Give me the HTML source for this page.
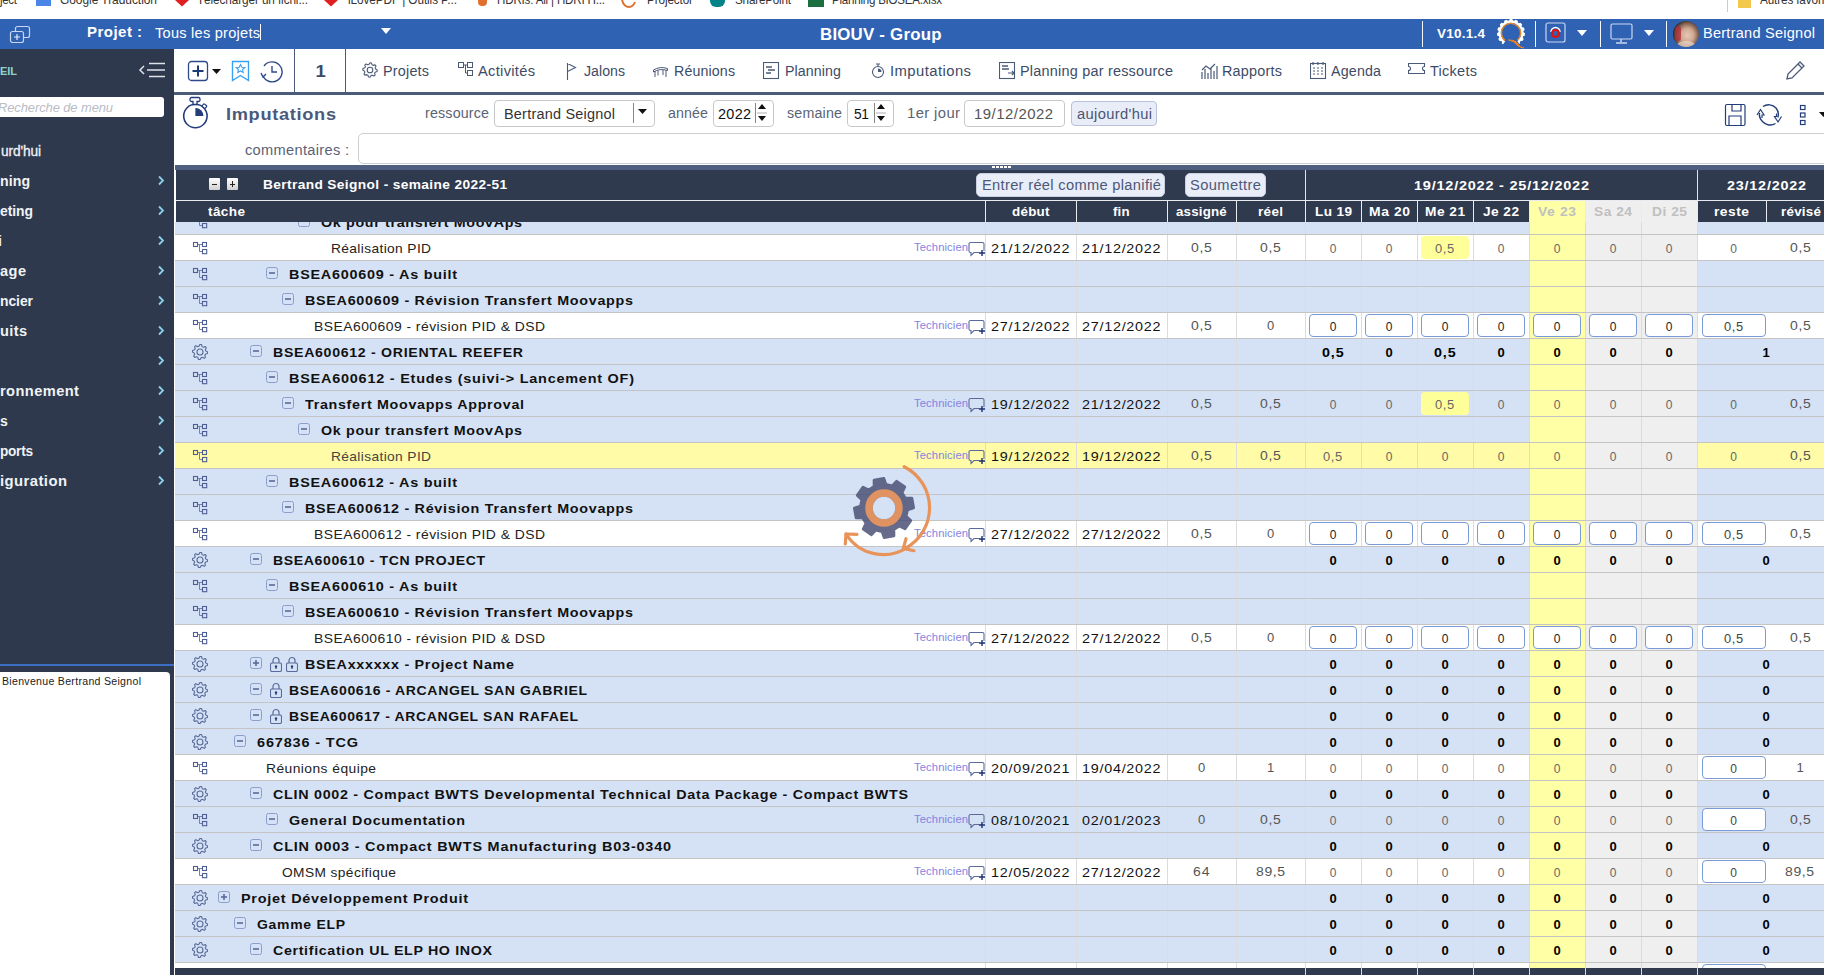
<!DOCTYPE html><html><head><meta charset="utf-8"><title>Imputations</title><style>
html,body{margin:0;padding:0;}
body{width:1824px;height:975px;overflow:hidden;position:relative;background:#fff;font-family:"Liberation Sans",sans-serif;}
.t{position:absolute;white-space:nowrap;}
.r{position:absolute;}
</style></head><body>
<div class="t " style="left:0.00px;top:-5.66px;font-size:12px;line-height:12px;color:#333;letter-spacing:-0.292px;transform:scaleX(0.9552);transform-origin:0 0;">ject</div>
<div class="t " style="left:60.00px;top:-5.66px;font-size:12px;line-height:12px;color:#333;letter-spacing:-0.033px;transform:scaleX(0.9946);transform-origin:0 0;">Google Traduction</div>
<div class="t " style="left:197.00px;top:-5.66px;font-size:12px;line-height:12px;color:#333;letter-spacing:-0.102px;transform:scaleX(0.9810);transform-origin:0 0;">Télécharger un fichi...</div>
<div class="t " style="left:348.00px;top:-5.66px;font-size:12px;line-height:12px;color:#333;letter-spacing:-0.095px;transform:scaleX(0.9826);transform-origin:0 0;">iLovePDF | Outils P...</div>
<div class="t " style="left:497.00px;top:-5.66px;font-size:12px;line-height:12px;color:#333;letter-spacing:-0.192px;transform:scaleX(0.9663);transform-origin:0 0;">HDRIs: All | HDRI H...</div>
<div class="t " style="left:647.00px;top:-5.66px;font-size:12px;line-height:12px;color:#333;letter-spacing:-0.129px;transform:scaleX(0.9790);transform-origin:0 0;">Projector</div>
<div class="t " style="left:735.00px;top:-5.66px;font-size:12px;line-height:12px;color:#333;letter-spacing:-0.193px;transform:scaleX(0.9716);transform-origin:0 0;">SharePoint</div>
<div class="t " style="left:832.00px;top:-5.66px;font-size:12px;line-height:12px;color:#333;letter-spacing:-0.238px;transform:scaleX(0.9633);transform-origin:0 0;">Planning BIOSEA.xlsx</div>
<div class="t " style="left:1760.00px;top:-5.66px;font-size:12px;line-height:12px;color:#333;letter-spacing:-0.132px;transform:scaleX(0.9771);transform-origin:0 0;">Autres favoris</div>
<div class="r" style="left:36px;top:0px;width:15px;height:6px;background:#4a86e8;"></div>
<svg class="r" style="left:175px;top:0px;" width="14" height="7" viewBox="0 0 14 7"><path d="M0 0 L14 0 L7 6.5 Z" fill="#e02020"/></svg>
<svg class="r" style="left:324px;top:0px;" width="14" height="7" viewBox="0 0 14 7"><path d="M0 0 L14 0 L7 6.5 Z" fill="#e02020"/></svg>
<div class="r" style="left:478px;top:0px;width:9px;height:6px;background:#e07030;border-radius:0 0 4px 4px;"></div>
<svg class="r" style="left:620px;top:0px;" width="18" height="8" viewBox="0 0 18 8"><path d="M2 0 Q4 7 9 7 Q13 7 15 2" stroke="#e07030" stroke-width="2" fill="none"/></svg>
<div class="r" style="left:710px;top:0px;width:15px;height:7px;background:#038387;border-radius:0 0 6px 6px;"></div>
<div class="r" style="left:808px;top:0px;width:16px;height:7px;background:#1d6f42;"></div>
<div class="r" style="left:1727px;top:0px;width:1px;height:12px;background:#ccc;"></div>
<div class="r" style="left:1738px;top:0px;width:13px;height:8px;background:#f2c94c;"></div>
<div class="r" style="left:0px;top:19px;width:1824px;height:30px;background:#3062b3;"></div>
<svg class="r" style="left:8px;top:25px;" width="24" height="18" viewBox="0 0 24 18"><rect x="7.5" y="1.5" width="14" height="11" rx="2" fill="none" stroke="#c9d6f0" stroke-width="1.2"/><rect x="2.5" y="6.5" width="13" height="11" rx="2" fill="#3062b3" stroke="#c9d6f0" stroke-width="1.2"/><path d="M9 9v6M6 12h6" stroke="#e6edf9" stroke-width="1.2"/></svg>
<div class="t " style="left:87.00px;top:25.15px;font-size:14px;line-height:14px;color:#fff;font-weight:bold;letter-spacing:0.452px;transform:scaleX(1.0702);transform-origin:0 0;">Projet :</div>
<div class="t " style="left:155.00px;top:26.15px;font-size:14px;line-height:14px;color:#fff;letter-spacing:0.248px;transform:scaleX(1.0397);transform-origin:0 0;">Tous les projets</div>
<div class="r" style="left:260px;top:24px;width:1px;height:16px;background:#fff;"></div>
<svg class="r" style="left:381px;top:28px;" width="10" height="6" viewBox="0 0 10 6"><path d="M0 0h10L5 6z" fill="#fff"/></svg>
<div class="t " style="left:819.75px;top:25.83px;font-size:16.5px;line-height:16.5px;color:#fff;font-weight:bold;letter-spacing:0.208px;transform:scaleX(1.0219);transform-origin:0 0;">BIOUV - Group</div>
<div class="r" style="left:1422px;top:21px;width:1px;height:26px;background:#fff;opacity:0.95;"></div>
<div class="r" style="left:1535px;top:21px;width:1px;height:26px;background:#fff;opacity:0.95;"></div>
<div class="r" style="left:1600px;top:21px;width:1px;height:26px;background:#fff;opacity:0.95;"></div>
<div class="r" style="left:1666px;top:21px;width:1px;height:26px;background:#fff;opacity:0.95;"></div>
<div class="t " style="left:1437.00px;top:27.00px;font-size:13px;line-height:13px;color:#fff;font-weight:bold;letter-spacing:0.256px;transform:scaleX(1.0355);transform-origin:0 0;">V10.1.4</div>
<svg class="r" style="left:1495px;top:19px;" width="32" height="30" viewBox="0 0 32 30"><path d="M14.03,1.56 L14.78,0.05 L17.22,0.05 L17.97,1.56 L19.26,1.83 L20.56,0.76 L22.79,1.76 L22.86,3.43 L23.93,4.21 L25.55,3.76 L27.18,5.57 L26.57,7.14 L27.23,8.28 L28.89,8.53 L29.64,10.85 L28.44,12.03 L28.58,13.34 L30.00,14.24 L29.74,16.67 L28.17,17.26 L27.76,18.52 L28.69,19.92 L27.47,22.03 L25.79,21.93 L24.91,22.91 L25.18,24.57 L23.21,26.00 L21.72,25.23 L20.52,25.76 L20.09,27.39 L17.71,27.90 L16.66,26.58 L15.34,26.58 L14.29,27.90 L11.91,27.39 L11.48,25.76 L10.28,25.23 L8.79,26.00 L6.82,24.57 L7.09,22.91 L6.21,21.93 L4.53,22.03 L3.31,19.92 L4.24,18.52 L3.83,17.26 L2.26,16.67 L2.00,14.24 L3.42,13.34 L3.56,12.03 L2.36,10.85 L3.11,8.53 L4.77,8.28 L5.43,7.14 L4.82,5.57 L6.45,3.76 L8.07,4.21 L9.14,3.43 L9.21,1.76 L11.44,0.76 L12.74,1.83Z" fill="#fff"/><circle cx="16" cy="14" r="10.2" fill="#3062b3"/><path d="M16,14 L27.08,28.18 L16.00,34.00 L5.68,28.74Z" fill="#3062b3"/><path d="M10.09,21.56 A9.6 9.6 0 1 1 22.42,21.13" stroke="#e8892b" stroke-width="1.3" fill="none"/><path d="M13.5,21 Q21,21 23,25 Q25,29 29,29 Q23,28 21,25 Q19,22 13.5,21Z" fill="#f08020" stroke="#f08020" stroke-width="1"/></svg>
<svg class="r" style="left:1545px;top:22px;" width="22" height="22" viewBox="0 0 22 22"><rect x="1" y="1" width="19" height="19" rx="2" fill="none" stroke="#c9d6f0" stroke-width="1.2"/><path d="M6 10 a4.5 4.5 0 0 1 9 0" stroke="#fff" stroke-width="1.5" fill="none"/><circle cx="10.5" cy="11.5" r="3.5" fill="none" stroke="#e01010" stroke-width="2.2"/></svg>
<svg class="r" style="left:1577px;top:30px;" width="10" height="6" viewBox="0 0 10 6"><path d="M0 0h10L5 6z" fill="#fff"/></svg>
<svg class="r" style="left:1610px;top:23px;" width="24" height="22" viewBox="0 0 24 22"><rect x="1" y="1" width="21" height="15" rx="1.5" fill="none" stroke="#c9d6f0" stroke-width="1.2"/><path d="M11 16v3M6 20h11" stroke="#c9d6f0" stroke-width="1.5"/></svg>
<svg class="r" style="left:1644px;top:30px;" width="10" height="6" viewBox="0 0 10 6"><path d="M0 0h10L5 6z" fill="#fff"/></svg>
<div class="r" style="left:1673px;top:21px;width:26px;height:26px;border-radius:50%;overflow:hidden;background:radial-gradient(ellipse 55% 60% at 55% 55%,#e6c8b8 0,#d0a890 45%,#7a5a4a 80%,#2e2420 100%);"><div style="position:absolute;left:2px;top:5px;width:6px;height:15px;border-radius:3px;background:#b02a3a;opacity:0.75;"></div><div style="position:absolute;left:4px;top:20px;width:18px;height:8px;background:#e8d8c8;opacity:0.7;border-radius:50%;"></div></div>
<div class="t " style="left:1703.00px;top:26.15px;font-size:14px;line-height:14px;color:#fff;letter-spacing:0.248px;transform:scaleX(1.0370);transform-origin:0 0;">Bertrand Seignol</div>
<div class="r" style="left:0px;top:49px;width:174px;height:926px;background:#2e394d;"></div>
<div class="t " style="left:0.00px;top:65.69px;font-size:11px;line-height:11px;color:#8fd3c8;font-weight:bold;letter-spacing:-0.028px;">EIL</div>
<svg class="r" style="left:138px;top:60px;" width="30" height="20" viewBox="0 0 30 20"><path d="M6 6 L2 10 L6 14" stroke="#e0e4ea" stroke-width="1.5" fill="none"/><path d="M11 3.5h16M9 10h18M11 16.5h16" stroke="#e0e4ea" stroke-width="1.6"/></svg>
<div class="r" style="left:-10px;top:97px;width:174px;height:20px;background:#fff;border-radius:3px;"></div>
<div class="t " style="left:-2.00px;top:101.00px;font-size:13px;line-height:13px;color:#b8bcc4;letter-spacing:-0.065px;transform:scaleX(0.9912);transform-origin:0 0;font-style:italic;">Recherche de menu</div>
<div class="t " style="left:1.00px;top:144.15px;font-size:14px;line-height:14px;color:#f0f2f5;letter-spacing:-0.135px;transform:scaleX(0.9809);transform-origin:0 0;-webkit-text-stroke:0.3px #f0f2f5;">urd&#x27;hui</div>
<div class="t " style="left:0.00px;top:174.15px;font-size:14px;line-height:14px;color:#f0f2f5;font-weight:bold;letter-spacing:0.075px;transform:scaleX(1.0077);transform-origin:0 0;">ning</div>
<svg class="r" style="left:157px;top:175px;" width="8" height="11" viewBox="0 0 8 11"><path d="M2 1.5 L6 5.5 L2 9.5" stroke="#8ccfe8" stroke-width="1.8" fill="none"/></svg>
<div class="t " style="left:0.00px;top:204.15px;font-size:14px;line-height:14px;color:#f0f2f5;font-weight:bold;letter-spacing:-0.056px;transform:scaleX(0.9934);transform-origin:0 0;">eting</div>
<svg class="r" style="left:157px;top:205px;" width="8" height="11" viewBox="0 0 8 11"><path d="M2 1.5 L6 5.5 L2 9.5" stroke="#8ccfe8" stroke-width="1.8" fill="none"/></svg>
<div class="t " style="left:-2.00px;top:234.15px;font-size:14px;line-height:14px;color:#f0f2f5;font-weight:bold;">i</div>
<svg class="r" style="left:157px;top:235px;" width="8" height="11" viewBox="0 0 8 11"><path d="M2 1.5 L6 5.5 L2 9.5" stroke="#8ccfe8" stroke-width="1.8" fill="none"/></svg>
<div class="t " style="left:0.00px;top:264.15px;font-size:14px;line-height:14px;color:#f0f2f5;font-weight:bold;letter-spacing:0.451px;transform:scaleX(1.0389);transform-origin:0 0;">age</div>
<svg class="r" style="left:157px;top:265px;" width="8" height="11" viewBox="0 0 8 11"><path d="M2 1.5 L6 5.5 L2 9.5" stroke="#8ccfe8" stroke-width="1.8" fill="none"/></svg>
<div class="t " style="left:0.00px;top:294.15px;font-size:14px;line-height:14px;color:#f0f2f5;font-weight:bold;letter-spacing:-0.058px;transform:scaleX(0.9931);transform-origin:0 0;">ncier</div>
<svg class="r" style="left:157px;top:295px;" width="8" height="11" viewBox="0 0 8 11"><path d="M2 1.5 L6 5.5 L2 9.5" stroke="#8ccfe8" stroke-width="1.8" fill="none"/></svg>
<div class="t " style="left:0.00px;top:324.15px;font-size:14px;line-height:14px;color:#f0f2f5;font-weight:bold;letter-spacing:0.337px;transform:scaleX(1.0424);transform-origin:0 0;">uits</div>
<svg class="r" style="left:157px;top:325px;" width="8" height="11" viewBox="0 0 8 11"><path d="M2 1.5 L6 5.5 L2 9.5" stroke="#8ccfe8" stroke-width="1.8" fill="none"/></svg>
<svg class="r" style="left:157px;top:355px;" width="8" height="11" viewBox="0 0 8 11"><path d="M2 1.5 L6 5.5 L2 9.5" stroke="#8ccfe8" stroke-width="1.8" fill="none"/></svg>
<div class="t " style="left:0.00px;top:384.15px;font-size:14px;line-height:14px;color:#f0f2f5;font-weight:bold;letter-spacing:0.398px;transform:scaleX(1.0460);transform-origin:0 0;">ronnement</div>
<svg class="r" style="left:157px;top:385px;" width="8" height="11" viewBox="0 0 8 11"><path d="M2 1.5 L6 5.5 L2 9.5" stroke="#8ccfe8" stroke-width="1.8" fill="none"/></svg>
<div class="t " style="left:0.00px;top:414.15px;font-size:14px;line-height:14px;color:#f0f2f5;font-weight:bold;">s</div>
<svg class="r" style="left:157px;top:415px;" width="8" height="11" viewBox="0 0 8 11"><path d="M2 1.5 L6 5.5 L2 9.5" stroke="#8ccfe8" stroke-width="1.8" fill="none"/></svg>
<div class="t " style="left:0.00px;top:444.15px;font-size:14px;line-height:14px;color:#f0f2f5;font-weight:bold;letter-spacing:-0.257px;transform:scaleX(0.9714);transform-origin:0 0;">ports</div>
<svg class="r" style="left:157px;top:445px;" width="8" height="11" viewBox="0 0 8 11"><path d="M2 1.5 L6 5.5 L2 9.5" stroke="#8ccfe8" stroke-width="1.8" fill="none"/></svg>
<div class="t " style="left:0.00px;top:474.15px;font-size:14px;line-height:14px;color:#f0f2f5;font-weight:bold;letter-spacing:0.420px;transform:scaleX(1.0594);transform-origin:0 0;">iguration</div>
<svg class="r" style="left:157px;top:475px;" width="8" height="11" viewBox="0 0 8 11"><path d="M2 1.5 L6 5.5 L2 9.5" stroke="#8ccfe8" stroke-width="1.8" fill="none"/></svg>
<div class="r" style="left:0px;top:664px;width:174px;height:2px;background:#3a6fc4;"></div>
<div class="r" style="left:-6px;top:672px;width:176px;height:310px;background:#fff;border-radius:4px;"></div>
<div class="t " style="left:2.00px;top:676.54px;font-size:10px;line-height:10px;color:#222;letter-spacing:0.273px;transform:scaleX(1.0581);transform-origin:0 0;">Bienvenue Bertrand Seignol</div>
<div class="r" style="left:174px;top:49px;width:1650px;height:43px;background:#fff;"></div>
<div class="r" style="left:174px;top:92px;width:1650px;height:3px;background:#4b5b7b;"></div>
<div class="r" style="left:294px;top:49px;width:1px;height:43px;background:#4b5b7b;"></div>
<div class="r" style="left:345px;top:49px;width:1px;height:43px;background:#4b5b7b;"></div>
<svg class="r" style="left:187px;top:60px;" width="22" height="22" viewBox="0 0 22 22"><rect x="1.5" y="1.5" width="19" height="19" rx="3" fill="none" stroke="#2e4a8a" stroke-width="1.3"/><path d="M11 5.5v11M5.5 11h11" stroke="#1a3a7a" stroke-width="2"/></svg>
<svg class="r" style="left:212px;top:69px;" width="9" height="5" viewBox="0 0 9 5"><path d="M0 0h9L4.5 5z" fill="#111"/></svg>
<svg class="r" style="left:231px;top:60px;" width="20" height="23" viewBox="0 0 20 23"><path d="M1.5 1.5h16v19l-8-5-8 5z" fill="none" stroke="#3aa0f0" stroke-width="1.4"/><path d="M9.5 4.5l1.3 2.7 3 .3-2.2 2 .6 3-2.7-1.5-2.7 1.5.6-3-2.2-2 3-.3z" fill="none" stroke="#3aa0f0" stroke-width="1.1"/></svg>
<svg class="r" style="left:259px;top:60px;" width="24" height="23" viewBox="0 0 24 23"><path d="M4 16 A10 10 0 1 0 5 6" stroke="#2e4a8a" stroke-width="1.4" fill="none"/><path d="M13 6v6h5" stroke="#2e4a8a" stroke-width="1.4" fill="none"/><path d="M2 13 L4 17 L7 14" stroke="#2e4a8a" stroke-width="1.4" fill="none"/></svg>
<div class="t " style="left:315.71px;top:62.73px;font-size:16.5px;line-height:16.5px;color:#3d4b66;font-weight:bold;transform:scaleX(1.12);">1</div>
<svg class="r" style="left:362px;top:62px;" width="18" height="19" viewBox="0 0 18 19"><path d="M8.00,0.80 L9.40,0.94 L10.14,2.83 L11.11,3.34 L13.09,2.91 L13.99,4.00 L13.17,5.86 L13.49,6.91 L15.20,8.00 L15.06,9.40 L13.17,10.14 L12.66,11.11 L13.09,13.09 L12.00,13.99 L10.14,13.17 L9.09,13.49 L8.00,15.20 L6.60,15.06 L5.86,13.17 L4.89,12.66 L2.91,13.09 L2.01,12.00 L2.83,10.14 L2.51,9.09 L0.80,8.00 L0.94,6.60 L2.83,5.86 L3.34,4.89 L2.91,2.91 L4.00,2.01 L5.86,2.83 L6.91,2.51Z" fill="none" stroke="#4b5a78" stroke-width="1.1" stroke-linejoin="round"/><circle cx="8" cy="8" r="2.8" fill="none" stroke="#4b5a78" stroke-width="1.1"/></svg>
<div class="t " style="left:383.00px;top:64.15px;font-size:14px;line-height:14px;color:#3d4b66;letter-spacing:0.197px;transform:scaleX(1.0279);transform-origin:0 0;">Projets</div>
<svg class="r" style="left:458px;top:62px;" width="18" height="19" viewBox="0 0 18 19"><rect x="0.5" y="0.5" width="5" height="5" fill="none" stroke="#4b5a78"/><rect x="9.5" y="0.5" width="5" height="5" fill="none" stroke="#4b5a78"/><rect x="9.5" y="8.5" width="5" height="5" fill="none" stroke="#4b5a78"/><path d="M5.5 3h4M7.5 3v8h2" stroke="#4b5a78" fill="none"/></svg>
<div class="t " style="left:478.00px;top:64.15px;font-size:14px;line-height:14px;color:#3d4b66;letter-spacing:0.291px;transform:scaleX(1.0468);transform-origin:0 0;">Activités</div>
<svg class="r" style="left:566px;top:62px;" width="18" height="19" viewBox="0 0 18 19"><path d="M1.5 1v17M1.5 1.5l8 4-8 4" stroke="#4b5a78" stroke-width="1.1" fill="none"/></svg>
<div class="t " style="left:584.00px;top:64.15px;font-size:14px;line-height:14px;color:#3d4b66;letter-spacing:0.053px;transform:scaleX(1.0066);transform-origin:0 0;">Jalons</div>
<svg class="r" style="left:652px;top:62px;" width="18" height="19" viewBox="0 0 18 19"><path d="M1.5 8 Q8 4 15.5 6.5 V8.5 Q8 6 1.5 10z M3 9v6M14 8v7M6 8.5v5M11 8v5" stroke="#4b5a78" stroke-width="1" fill="none"/></svg>
<div class="t " style="left:674.00px;top:64.15px;font-size:14px;line-height:14px;color:#3d4b66;letter-spacing:0.130px;transform:scaleX(1.0156);transform-origin:0 0;">Réunions</div>
<svg class="r" style="left:763px;top:62px;" width="18" height="19" viewBox="0 0 18 19"><rect x="0.5" y="0.5" width="15" height="16" fill="none" stroke="#4b5a78" stroke-width="1.1"/><path d="M3 5h6M5 8h7M3 11h5" stroke="#4b5a78" stroke-width="1.3"/></svg>
<div class="t " style="left:785.00px;top:64.15px;font-size:14px;line-height:14px;color:#3d4b66;letter-spacing:0.106px;transform:scaleX(1.0139);transform-origin:0 0;">Planning</div>
<svg class="r" style="left:871px;top:62px;" width="18" height="19" viewBox="0 0 18 19"><circle cx="7" cy="10" r="5.5" fill="none" stroke="#4b5a78" stroke-width="1.1"/><path d="M5 2h4M7 2v2.5" stroke="#4b5a78" stroke-width="1.1"/><path d="M7 10V6.5A3.5 3.5 0 0 1 10.5 10z" fill="#4b5a78"/></svg>
<div class="t " style="left:890.00px;top:64.15px;font-size:14px;line-height:14px;color:#3d4b66;letter-spacing:0.407px;transform:scaleX(1.0596);transform-origin:0 0;">Imputations</div>
<svg class="r" style="left:999px;top:62px;" width="18" height="19" viewBox="0 0 18 19"><rect x="0.5" y="0.5" width="15" height="16" fill="none" stroke="#4b5a78" stroke-width="1.1"/><path d="M3 4h6M3 7h7" stroke="#4b5a78" stroke-width="1.3"/><path d="M9 11h6l-2-2M15 11l-2 2" stroke="#4b5a78" stroke-width="1.1" fill="none"/></svg>
<div class="t " style="left:1020.00px;top:64.15px;font-size:14px;line-height:14px;color:#3d4b66;letter-spacing:0.208px;transform:scaleX(1.0314);transform-origin:0 0;">Planning par ressource</div>
<svg class="r" style="left:1201px;top:62px;" width="18" height="19" viewBox="0 0 18 19"><path d="M1 17V10M4 17V7M7 17V11M10 17V6M13 17V9M16 17V4M1 8l4-4 4 3 5-5" stroke="#4b5a78" stroke-width="1.2" fill="none"/></svg>
<div class="t " style="left:1222.00px;top:64.15px;font-size:14px;line-height:14px;color:#3d4b66;letter-spacing:0.222px;transform:scaleX(1.0281);transform-origin:0 0;">Rapports</div>
<svg class="r" style="left:1310px;top:62px;" width="18" height="19" viewBox="0 0 18 19"><rect x="0.5" y="1.5" width="15" height="15" fill="none" stroke="#4b5a78" stroke-width="1.1"/><path d="M3 0v3M8 0v3M13 0v3M3 6h2M7 6h2M11 6h2M3 9h2M7 9h2M11 9h2M3 12h2M7 12h2M11 12h2" stroke="#4b5a78" stroke-width="1.2"/></svg>
<div class="t " style="left:1331.00px;top:64.15px;font-size:14px;line-height:14px;color:#3d4b66;letter-spacing:0.170px;transform:scaleX(1.0179);transform-origin:0 0;">Agenda</div>
<svg class="r" style="left:1408px;top:62px;" width="18" height="19" viewBox="0 0 18 19"><path d="M0.5 1.5h16v3a2 2 0 0 0 0 4v3h-16v-3a2 2 0 0 0 0-4z" fill="none" stroke="#4b5a78" stroke-width="1.1"/></svg>
<div class="t " style="left:1430.00px;top:64.15px;font-size:14px;line-height:14px;color:#3d4b66;letter-spacing:0.256px;transform:scaleX(1.0363);transform-origin:0 0;">Tickets</div>
<svg class="r" style="left:1784px;top:60px;" width="22" height="22" viewBox="0 0 22 22"><path d="M3 19l1-5L16 2l4 4L8 18z" fill="none" stroke="#4b5a78" stroke-width="1.3"/><path d="M14 4l4 4" stroke="#4b5a78" stroke-width="1.3"/></svg>
<svg class="r" style="left:182px;top:96px;" width="28" height="34" viewBox="0 0 28 34"><circle cx="13.4" cy="20" r="11.7" fill="none" stroke="#233c7a" stroke-width="1.6"/><path d="M10.5 1.5h6a1.5 1.5 0 0 1 1.5 1.5v1a1.5 1.5 0 0 1-1.5 1.5h-1.5v3h-4v-3h-1.5a1.5 1.5 0 0 1-1.5-1.5v-1a1.5 1.5 0 0 1 1.5-1.5z" fill="#fff" stroke="#233c7a" stroke-width="1.3"/><rect x="20.5" y="8.5" width="4" height="3.2" rx="0.8" transform="rotate(38 22.5 10.1)" fill="#fff" stroke="#233c7a" stroke-width="1.2"/><path d="M13.4 20v-8a8 8 0 0 1 8 8z" fill="#233c7a"/></svg>
<div class="t " style="left:226.00px;top:105.61px;font-size:17px;line-height:17px;color:#4a5a7c;font-weight:bold;letter-spacing:0.638px;transform:scaleX(1.0710);transform-origin:0 0;">Imputations</div>
<div class="t " style="left:425.00px;top:106.15px;font-size:14px;line-height:14px;color:#5a6375;letter-spacing:0.155px;transform:scaleX(1.0206);transform-origin:0 0;">ressource</div>
<div class="r" style="left:494px;top:100px;width:159px;height:25px;border:1px solid #c8c8c8;border-radius:4px;background:#fff;"></div>
<div class="t " style="left:504.00px;top:107.15px;font-size:14px;line-height:14px;color:#333;letter-spacing:0.217px;transform:scaleX(1.0322);transform-origin:0 0;">Bertrand Seignol</div>
<div class="r" style="left:633px;top:103px;width:1px;height:20px;background:#888;"></div>
<svg class="r" style="left:638px;top:109px;" width="9" height="5" viewBox="0 0 9 5"><path d="M0 0h9L4.5 5z" fill="#111"/></svg>
<div class="t " style="left:668.00px;top:106.15px;font-size:14px;line-height:14px;color:#5a6375;letter-spacing:0.132px;transform:scaleX(1.0137);transform-origin:0 0;">année</div>
<div class="r" style="left:713px;top:100px;width:59px;height:25px;border:1px solid #c8c8c8;border-radius:4px;background:#fff;"></div>
<div class="t " style="left:718.00px;top:107.15px;font-size:14px;line-height:14px;color:#111;letter-spacing:0.300px;transform:scaleX(1.0298);transform-origin:0 0;">2022</div>
<div class="r" style="left:755px;top:103px;width:1px;height:20px;background:#888;"></div>
<svg class="r" style="left:757px;top:103px;" width="10" height="20" viewBox="0 0 10 20"><path d="M1 6h8L5 1z M1 13h8L5 18z" fill="#111"/><path d="M0 10h10" stroke="#999" stroke-width="0.8"/></svg>
<div class="t " style="left:787.00px;top:106.15px;font-size:14px;line-height:14px;color:#5a6375;letter-spacing:0.170px;transform:scaleX(1.0197);transform-origin:0 0;">semaine</div>
<div class="r" style="left:847px;top:100px;width:45px;height:25px;border:1px solid #c8c8c8;border-radius:4px;background:#fff;"></div>
<div class="t " style="left:854.00px;top:107.15px;font-size:14px;line-height:14px;color:#111;letter-spacing:-0.291px;transform:scaleX(0.9816);transform-origin:0 0;">51</div>
<div class="r" style="left:874px;top:103px;width:1px;height:20px;background:#888;"></div>
<svg class="r" style="left:876px;top:103px;" width="10" height="20" viewBox="0 0 10 20"><path d="M1 6h8L5 1z M1 13h8L5 18z" fill="#111"/><path d="M0 10h10" stroke="#999" stroke-width="0.8"/></svg>
<div class="t " style="left:907.00px;top:106.15px;font-size:14px;line-height:14px;color:#5a6375;letter-spacing:0.373px;transform:scaleX(1.0583);transform-origin:0 0;">1er jour</div>
<div class="r" style="left:964px;top:100px;width:99px;height:25px;border:1px solid #c8c8c8;border-radius:4px;background:#fff;"></div>
<div class="t " style="left:974.00px;top:107.15px;font-size:14px;line-height:14px;color:#555;letter-spacing:0.466px;transform:scaleX(1.0637);transform-origin:0 0;">19/12/2022</div>
<div class="r" style="left:1071px;top:101px;width:84px;height:23px;border:1px solid #b9c2da;border-radius:4px;background:#e9edf8;"></div>
<div class="t " style="left:1077.00px;top:107.15px;font-size:14px;line-height:14px;color:#4a5575;letter-spacing:0.330px;transform:scaleX(1.0510);transform-origin:0 0;">aujourd&#x27;hui</div>
<svg class="r" style="left:1724px;top:103px;" width="22" height="24" viewBox="0 0 22 24"><rect x="1.5" y="1.5" width="19.5" height="21" rx="1.5" fill="none" stroke="#233c7a" stroke-width="1.2"/><path d="M8 1.5v6.5h9V1.5M5 22.5v-9.5h12v9.5" stroke="#233c7a" stroke-width="1.2" fill="none"/></svg>
<svg class="r" style="left:1755px;top:102px;" width="28" height="26" viewBox="0 0 28 26"><path d="M8 4.5a10 10 0 0 1 13 1.5a10 10 0 0 1 1.8 9.5" stroke="#233c7a" stroke-width="1.4" fill="none"/><path d="M20.5 21.5a10 10 0 0 1-13-2a10 10 0 0 1-3-8.5" stroke="#233c7a" stroke-width="1.4" fill="none"/><path d="M2 13l3.5-5.5 3.5 5.5h-2v3" stroke="#233c7a" stroke-width="1.2" fill="none"/><path d="M26.5 14.5l-3.5 5.5-3.5-5.5h2v-3" stroke="#233c7a" stroke-width="1.2" fill="none"/></svg>
<svg class="r" style="left:1799px;top:104px;" width="10" height="22" viewBox="0 0 10 22"><rect x="1.5" y="1.5" width="4.5" height="4" fill="none" stroke="#233c7a" stroke-width="1.2"/><rect x="1.5" y="9" width="4.5" height="4" fill="none" stroke="#233c7a" stroke-width="1.2"/><rect x="1.5" y="16.5" width="4.5" height="4" fill="none" stroke="#233c7a" stroke-width="1.2"/></svg>
<svg class="r" style="left:1819px;top:112px;" width="9" height="5" viewBox="0 0 9 5"><path d="M0 0h9L4.5 5z" fill="#111"/></svg>
<div class="t " style="left:245.00px;top:143.15px;font-size:14px;line-height:14px;color:#5a6375;letter-spacing:0.306px;transform:scaleX(1.0434);transform-origin:0 0;">commentaires :</div>
<div class="r" style="left:358px;top:133px;width:1480px;height:29px;border:1px solid #cfcfcf;border-radius:5px;background:#fff;"></div>
<div class="r" style="left:175px;top:165px;width:1649px;height:5px;background:#4e5f80;"></div>
<div class="r" style="left:992px;top:166px;width:20px;height:2px;background:repeating-linear-gradient(90deg,#fff 0 3px,transparent 3px 4px);"></div>
<div class="r" style="left:175px;top:170px;width:1649px;height:52px;background:#fff;"></div>
<div class="r" style="left:176px;top:170px;width:1648px;height:30px;background:#2f3a4e;"></div>
<div class="r" style="left:176px;top:200px;width:1648px;height:1px;background:#e8ebf0;"></div>
<div class="r" style="left:176px;top:201px;width:1648px;height:21px;background:#2f3a4e;"></div>
<div class="r" style="left:209px;top:178px;width:11px;height:12px;background:linear-gradient(#fff,#d0d0d0);border-radius:1px;"></div>
<div class="r" style="left:212px;top:183.5px;width:5px;height:1.5px;background:#222;"></div>
<div class="r" style="left:227px;top:178px;width:11px;height:12px;background:linear-gradient(#fff,#d0d0d0);border-radius:1px;"></div>
<div class="r" style="left:230px;top:183.5px;width:5px;height:1.5px;background:#222;"></div>
<div class="r" style="left:231.75px;top:181.25px;width:1.5px;height:6px;background:#222;"></div>
<div class="t " style="left:263.00px;top:178.00px;font-size:13px;line-height:13px;color:#fff;font-weight:bold;letter-spacing:0.350px;transform:scaleX(1.0555);transform-origin:0 0;">Bertrand Seignol - semaine 2022-51</div>
<div class="r" style="left:976px;top:173px;width:187px;height:22px;background:#e9edf8;border:1px solid #c9d0e2;border-radius:5px;"></div>
<div class="t " style="left:982.00px;top:178.15px;font-size:14px;line-height:14px;color:#4d5877;letter-spacing:0.298px;transform:scaleX(1.0477);transform-origin:0 0;">Entrer réel comme planifié</div>
<div class="r" style="left:1185px;top:173px;width:79px;height:22px;background:#e9edf8;border:1px solid #c9d0e2;border-radius:5px;"></div>
<div class="t " style="left:1190.00px;top:178.15px;font-size:14px;line-height:14px;color:#4d5877;letter-spacing:0.382px;transform:scaleX(1.0497);transform-origin:0 0;">Soumettre</div>
<div class="r" style="left:1305px;top:170px;width:1px;height:30px;background:#dfe3ea;"></div>
<div class="r" style="left:1697px;top:170px;width:1px;height:30px;background:#dfe3ea;"></div>
<div class="t " style="left:1413.50px;top:179.00px;font-size:13px;line-height:13px;color:#fff;font-weight:bold;letter-spacing:0.678px;transform:scaleX(1.1176);transform-origin:0 0;">19/12/2022 - 25/12/2022</div>
<div class="t " style="left:1726.50px;top:179.00px;font-size:13px;line-height:13px;color:#fff;font-weight:bold;letter-spacing:0.699px;transform:scaleX(1.1071);transform-origin:0 0;">23/12/2022</div>
<div class="r" style="left:985px;top:201px;width:1px;height:21px;background:#e8ebf0;"></div>
<div class="t " style="left:1011.75px;top:205.00px;font-size:13px;line-height:13px;color:#fff;font-weight:bold;letter-spacing:0.257px;transform:scaleX(1.0299);transform-origin:0 0;">début</div>
<div class="r" style="left:1076px;top:201px;width:1px;height:21px;background:#e8ebf0;"></div>
<div class="t " style="left:1113.25px;top:205.00px;font-size:13px;line-height:13px;color:#fff;font-weight:bold;letter-spacing:0.152px;transform:scaleX(1.0195);transform-origin:0 0;">fin</div>
<div class="r" style="left:1167px;top:201px;width:1px;height:21px;background:#e8ebf0;"></div>
<div class="t " style="left:1176.15px;top:205.00px;font-size:13px;line-height:13px;color:#fff;font-weight:bold;letter-spacing:0.186px;transform:scaleX(1.0236);transform-origin:0 0;">assigné</div>
<div class="r" style="left:1236px;top:201px;width:1px;height:21px;background:#e8ebf0;"></div>
<div class="t " style="left:1258.00px;top:205.00px;font-size:13px;line-height:13px;color:#fff;font-weight:bold;letter-spacing:0.299px;transform:scaleX(1.0404);transform-origin:0 0;">réel</div>
<div class="r" style="left:1305px;top:201px;width:1px;height:21px;background:#e8ebf0;"></div>
<div class="t " style="left:1314.50px;top:205.00px;font-size:13px;line-height:13px;color:#fff;font-weight:bold;letter-spacing:0.364px;transform:scaleX(1.0449);transform-origin:0 0;">Lu 19</div>
<div class="r" style="left:1361px;top:201px;width:1px;height:21px;background:#e8ebf0;"></div>
<div class="t " style="left:1368.50px;top:205.00px;font-size:13px;line-height:13px;color:#fff;font-weight:bold;letter-spacing:0.570px;transform:scaleX(1.0674);transform-origin:0 0;">Ma 20</div>
<div class="r" style="left:1417px;top:201px;width:1px;height:21px;background:#e8ebf0;"></div>
<div class="t " style="left:1425.00px;top:205.00px;font-size:13px;line-height:13px;color:#fff;font-weight:bold;letter-spacing:0.459px;transform:scaleX(1.0535);transform-origin:0 0;">Me 21</div>
<div class="r" style="left:1473px;top:201px;width:1px;height:21px;background:#e8ebf0;"></div>
<div class="t " style="left:1483.00px;top:205.00px;font-size:13px;line-height:13px;color:#fff;font-weight:bold;letter-spacing:0.412px;transform:scaleX(1.0533);transform-origin:0 0;">Je 22</div>
<div class="r" style="left:1529px;top:201px;width:56px;height:21px;background:#ffffa5;"></div>
<div class="r" style="left:1529px;top:201px;width:1px;height:21px;background:#e8ebf0;"></div>
<div class="t " style="left:1538.00px;top:205.00px;font-size:13px;line-height:13px;color:#c0c0c0;font-weight:bold;letter-spacing:0.554px;transform:scaleX(1.0713);transform-origin:0 0;">Ve 23</div>
<div class="r" style="left:1585px;top:201px;width:56px;height:21px;background:#efefef;"></div>
<div class="r" style="left:1585px;top:201px;width:1px;height:21px;background:#e8ebf0;"></div>
<div class="t " style="left:1594.00px;top:205.00px;font-size:13px;line-height:13px;color:#c0c0c0;font-weight:bold;letter-spacing:0.475px;transform:scaleX(1.0593);transform-origin:0 0;">Sa 24</div>
<div class="r" style="left:1641px;top:201px;width:56px;height:21px;background:#efefef;"></div>
<div class="r" style="left:1641px;top:201px;width:1px;height:21px;background:#e8ebf0;"></div>
<div class="t " style="left:1651.50px;top:205.00px;font-size:13px;line-height:13px;color:#c0c0c0;font-weight:bold;letter-spacing:0.462px;transform:scaleX(1.0632);transform-origin:0 0;">Di 25</div>
<div class="r" style="left:1697px;top:201px;width:1px;height:21px;background:#e8ebf0;"></div>
<div class="t " style="left:1714.00px;top:205.00px;font-size:13px;line-height:13px;color:#fff;font-weight:bold;letter-spacing:0.461px;transform:scaleX(1.0631);transform-origin:0 0;">reste</div>
<div class="r" style="left:1766px;top:201px;width:1px;height:21px;background:#e8ebf0;"></div>
<div class="t " style="left:1780.50px;top:205.00px;font-size:13px;line-height:13px;color:#fff;font-weight:bold;letter-spacing:0.233px;transform:scaleX(1.0320);transform-origin:0 0;">révisé</div>
<div class="t " style="left:208.00px;top:205.00px;font-size:13px;line-height:13px;color:#fff;font-weight:bold;letter-spacing:0.364px;transform:scaleX(1.0448);transform-origin:0 0;">tâche</div>
<div class="r" style="left:175px;top:222px;width:1649px;height:746px;overflow:hidden;">
<div class="r" style="left:0px;top:-13px;width:1649px;height:25px;background:#d5e2f5;"></div>
<div class="r" style="left:0px;top:12px;width:1649px;height:1px;background:#c4c4c4;"></div>
<div class="r" style="left:1354px;top:-13px;width:56px;height:25px;background:#ffffa5;"></div>
<div class="r" style="left:1410px;top:-13px;width:112px;height:25px;background:#efefef;"></div>
<div class="r" style="left:810px;top:-13px;width:1px;height:25px;background:#dcdcdc;"></div>
<div class="r" style="left:901px;top:-13px;width:1px;height:25px;background:#dcdcdc;"></div>
<div class="r" style="left:992px;top:-13px;width:1px;height:25px;background:#dcdcdc;"></div>
<div class="r" style="left:1061px;top:-13px;width:1px;height:25px;background:#dcdcdc;"></div>
<div class="r" style="left:1130px;top:-13px;width:1px;height:25px;background:#dcdcdc;"></div>
<div class="r" style="left:1186px;top:-13px;width:1px;height:25px;background:#dcdcdc;"></div>
<div class="r" style="left:1242px;top:-13px;width:1px;height:25px;background:#dcdcdc;"></div>
<div class="r" style="left:1298px;top:-13px;width:1px;height:25px;background:#dcdcdc;"></div>
<div class="r" style="left:1354px;top:-13px;width:1px;height:25px;background:#dcdcdc;"></div>
<div class="r" style="left:1410px;top:-13px;width:1px;height:25px;background:#dcdcdc;"></div>
<div class="r" style="left:1466px;top:-13px;width:1px;height:25px;background:#dcdcdc;"></div>
<div class="r" style="left:1522px;top:-13px;width:1px;height:25px;background:#dcdcdc;"></div>
<svg class="r" style="left:17px;top:-7px" width="16" height="14" viewBox="0 0 16 14"><rect x="1.5" y="1.5" width="4" height="4" fill="none" stroke="#4f5f95" stroke-width="1.1"/><rect x="10.5" y="1.5" width="4" height="4" fill="none" stroke="#4f5f95" stroke-width="1.1"/><rect x="10.5" y="8.5" width="4.2" height="4.2" fill="none" stroke="#4f5f95" stroke-width="1.1"/><path d="M6 3.5h4M7.5 3.5v7h2.5" stroke="#7080b0" fill="none"/></svg>
<svg class="r" style="left:123px;top:-7px" width="12" height="12" viewBox="0 0 12 12"><rect x="0.5" y="0.5" width="11" height="11" rx="2" fill="none" stroke="#8d9dc9"/><path d="M3 6h6" stroke="#5a6a9a" stroke-width="1.6"/></svg>
<div class="t " style="left:146.00px;top:-6.00px;font-size:13px;line-height:13px;color:#111;font-weight:bold;letter-spacing:0.621px;transform:scaleX(1.0972);transform-origin:0 0;">Ok pour transfert MoovAps</div>
<div class="r" style="left:0px;top:13px;width:1649px;height:25px;background:#fff;"></div>
<div class="r" style="left:0px;top:38px;width:1649px;height:1px;background:#c4c4c4;"></div>
<div class="r" style="left:1354px;top:13px;width:56px;height:25px;background:#ffffa5;"></div>
<div class="r" style="left:1410px;top:13px;width:112px;height:25px;background:#efefef;"></div>
<div class="r" style="left:810px;top:13px;width:1px;height:25px;background:#dcdcdc;"></div>
<div class="r" style="left:901px;top:13px;width:1px;height:25px;background:#dcdcdc;"></div>
<div class="r" style="left:992px;top:13px;width:1px;height:25px;background:#dcdcdc;"></div>
<div class="r" style="left:1061px;top:13px;width:1px;height:25px;background:#dcdcdc;"></div>
<div class="r" style="left:1130px;top:13px;width:1px;height:25px;background:#dcdcdc;"></div>
<div class="r" style="left:1186px;top:13px;width:1px;height:25px;background:#dcdcdc;"></div>
<div class="r" style="left:1242px;top:13px;width:1px;height:25px;background:#dcdcdc;"></div>
<div class="r" style="left:1298px;top:13px;width:1px;height:25px;background:#dcdcdc;"></div>
<div class="r" style="left:1354px;top:13px;width:1px;height:25px;background:#dcdcdc;"></div>
<div class="r" style="left:1410px;top:13px;width:1px;height:25px;background:#dcdcdc;"></div>
<div class="r" style="left:1466px;top:13px;width:1px;height:25px;background:#dcdcdc;"></div>
<div class="r" style="left:1522px;top:13px;width:1px;height:25px;background:#dcdcdc;"></div>
<svg class="r" style="left:17px;top:19px" width="16" height="14" viewBox="0 0 16 14"><rect x="1.5" y="1.5" width="4" height="4" fill="none" stroke="#4f5f95" stroke-width="1.1"/><rect x="10.5" y="1.5" width="4" height="4" fill="none" stroke="#4f5f95" stroke-width="1.1"/><rect x="10.5" y="8.5" width="4.2" height="4.2" fill="none" stroke="#4f5f95" stroke-width="1.1"/><path d="M6 3.5h4M7.5 3.5v7h2.5" stroke="#7080b0" fill="none"/></svg>
<div class="t " style="left:156.00px;top:20.00px;font-size:13px;line-height:13px;color:#222;letter-spacing:0.351px;transform:scaleX(1.0581);transform-origin:0 0;">Réalisation PID</div>
<div class="t " style="left:739.00px;top:19.69px;font-size:11px;line-height:11px;color:#8383e0;letter-spacing:0.110px;transform:scaleX(1.0195);transform-origin:0 0;">Technicien</div>
<svg class="r" style="left:793px;top:19px" width="18" height="16" viewBox="0 0 18 16"><path d="M2.5 1.5h12a1.5 1.5 0 0 1 1.5 1.5v7M11 11.5H6l-3 3v-3H2.5A1.5 1.5 0 0 1 1 10V3a1.5 1.5 0 0 1 1.5-1.5" stroke="#5a6a9a" stroke-width="1.1" fill="none"/><path d="M14 9v6M11 12h6" stroke="#1a3070" stroke-width="1.4"/></svg>
<div class="t " style="left:816.25px;top:20.00px;font-size:13px;line-height:13px;color:#111;letter-spacing:0.677px;transform:scaleX(1.1033);transform-origin:0 0;">21/12/2022</div>
<div class="t " style="left:907.25px;top:20.00px;font-size:13px;line-height:13px;color:#111;letter-spacing:0.677px;transform:scaleX(1.1033);transform-origin:0 0;">21/12/2022</div>
<div class="t " style="left:1016.11px;top:19.00px;font-size:13px;line-height:13px;color:#555;letter-spacing:0.630px;transform:scaleX(1.0750);transform-origin:0 0;">0,5</div>
<div class="t " style="left:1085.11px;top:19.00px;font-size:13px;line-height:13px;color:#555;letter-spacing:0.630px;transform:scaleX(1.0750);transform-origin:0 0;">0,5</div>
<div class="t " style="left:1154.66px;top:20.84px;font-size:12px;line-height:12px;color:#666;">0</div>
<div class="t " style="left:1210.66px;top:20.84px;font-size:12px;line-height:12px;color:#666;">0</div>
<div class="r" style="left:1246px;top:14px;width:48px;height:23px;background:#ffff99;border-radius:4px;"></div>
<div class="t " style="left:1260.41px;top:20.84px;font-size:12px;line-height:12px;color:#666;letter-spacing:0.582px;transform:scaleX(1.0750);transform-origin:0 0;">0,5</div>
<div class="t " style="left:1322.66px;top:20.84px;font-size:12px;line-height:12px;color:#666;">0</div>
<div class="t " style="left:1378.66px;top:20.84px;font-size:12px;line-height:12px;color:#666;">0</div>
<div class="t " style="left:1434.66px;top:20.84px;font-size:12px;line-height:12px;color:#666;">0</div>
<div class="t " style="left:1490.66px;top:20.84px;font-size:12px;line-height:12px;color:#666;">0</div>
<div class="t " style="left:1555.16px;top:20.84px;font-size:12px;line-height:12px;color:#666;">0</div>
<div class="t " style="left:1614.61px;top:19.00px;font-size:13px;line-height:13px;color:#555;letter-spacing:0.630px;transform:scaleX(1.0750);transform-origin:0 0;">0,5</div>
<div class="r" style="left:0px;top:39px;width:1649px;height:25px;background:#d5e2f5;"></div>
<div class="r" style="left:0px;top:64px;width:1649px;height:1px;background:#c4c4c4;"></div>
<div class="r" style="left:1354px;top:39px;width:56px;height:25px;background:#ffffa5;"></div>
<div class="r" style="left:1410px;top:39px;width:112px;height:25px;background:#efefef;"></div>
<div class="r" style="left:810px;top:39px;width:1px;height:25px;background:#dcdcdc;"></div>
<div class="r" style="left:901px;top:39px;width:1px;height:25px;background:#dcdcdc;"></div>
<div class="r" style="left:992px;top:39px;width:1px;height:25px;background:#dcdcdc;"></div>
<div class="r" style="left:1061px;top:39px;width:1px;height:25px;background:#dcdcdc;"></div>
<div class="r" style="left:1130px;top:39px;width:1px;height:25px;background:#dcdcdc;"></div>
<div class="r" style="left:1186px;top:39px;width:1px;height:25px;background:#dcdcdc;"></div>
<div class="r" style="left:1242px;top:39px;width:1px;height:25px;background:#dcdcdc;"></div>
<div class="r" style="left:1298px;top:39px;width:1px;height:25px;background:#dcdcdc;"></div>
<div class="r" style="left:1354px;top:39px;width:1px;height:25px;background:#dcdcdc;"></div>
<div class="r" style="left:1410px;top:39px;width:1px;height:25px;background:#dcdcdc;"></div>
<div class="r" style="left:1466px;top:39px;width:1px;height:25px;background:#dcdcdc;"></div>
<div class="r" style="left:1522px;top:39px;width:1px;height:25px;background:#dcdcdc;"></div>
<svg class="r" style="left:17px;top:45px" width="16" height="14" viewBox="0 0 16 14"><rect x="1.5" y="1.5" width="4" height="4" fill="none" stroke="#4f5f95" stroke-width="1.1"/><rect x="10.5" y="1.5" width="4" height="4" fill="none" stroke="#4f5f95" stroke-width="1.1"/><rect x="10.5" y="8.5" width="4.2" height="4.2" fill="none" stroke="#4f5f95" stroke-width="1.1"/><path d="M6 3.5h4M7.5 3.5v7h2.5" stroke="#7080b0" fill="none"/></svg>
<svg class="r" style="left:91px;top:45px" width="12" height="12" viewBox="0 0 12 12"><rect x="0.5" y="0.5" width="11" height="11" rx="2" fill="none" stroke="#8d9dc9"/><path d="M3 6h6" stroke="#5a6a9a" stroke-width="1.6"/></svg>
<div class="t " style="left:114.00px;top:46.00px;font-size:13px;line-height:13px;color:#111;font-weight:bold;letter-spacing:0.672px;transform:scaleX(1.1077);transform-origin:0 0;">BSEA600609 - As built</div>
<div class="r" style="left:0px;top:65px;width:1649px;height:25px;background:#d5e2f5;"></div>
<div class="r" style="left:0px;top:90px;width:1649px;height:1px;background:#c4c4c4;"></div>
<div class="r" style="left:1354px;top:65px;width:56px;height:25px;background:#ffffa5;"></div>
<div class="r" style="left:1410px;top:65px;width:112px;height:25px;background:#efefef;"></div>
<div class="r" style="left:810px;top:65px;width:1px;height:25px;background:#dcdcdc;"></div>
<div class="r" style="left:901px;top:65px;width:1px;height:25px;background:#dcdcdc;"></div>
<div class="r" style="left:992px;top:65px;width:1px;height:25px;background:#dcdcdc;"></div>
<div class="r" style="left:1061px;top:65px;width:1px;height:25px;background:#dcdcdc;"></div>
<div class="r" style="left:1130px;top:65px;width:1px;height:25px;background:#dcdcdc;"></div>
<div class="r" style="left:1186px;top:65px;width:1px;height:25px;background:#dcdcdc;"></div>
<div class="r" style="left:1242px;top:65px;width:1px;height:25px;background:#dcdcdc;"></div>
<div class="r" style="left:1298px;top:65px;width:1px;height:25px;background:#dcdcdc;"></div>
<div class="r" style="left:1354px;top:65px;width:1px;height:25px;background:#dcdcdc;"></div>
<div class="r" style="left:1410px;top:65px;width:1px;height:25px;background:#dcdcdc;"></div>
<div class="r" style="left:1466px;top:65px;width:1px;height:25px;background:#dcdcdc;"></div>
<div class="r" style="left:1522px;top:65px;width:1px;height:25px;background:#dcdcdc;"></div>
<svg class="r" style="left:17px;top:71px" width="16" height="14" viewBox="0 0 16 14"><rect x="1.5" y="1.5" width="4" height="4" fill="none" stroke="#4f5f95" stroke-width="1.1"/><rect x="10.5" y="1.5" width="4" height="4" fill="none" stroke="#4f5f95" stroke-width="1.1"/><rect x="10.5" y="8.5" width="4.2" height="4.2" fill="none" stroke="#4f5f95" stroke-width="1.1"/><path d="M6 3.5h4M7.5 3.5v7h2.5" stroke="#7080b0" fill="none"/></svg>
<svg class="r" style="left:107px;top:71px" width="12" height="12" viewBox="0 0 12 12"><rect x="0.5" y="0.5" width="11" height="11" rx="2" fill="none" stroke="#8d9dc9"/><path d="M3 6h6" stroke="#5a6a9a" stroke-width="1.6"/></svg>
<div class="t " style="left:130.00px;top:72.00px;font-size:13px;line-height:13px;color:#111;font-weight:bold;letter-spacing:0.647px;transform:scaleX(1.1021);transform-origin:0 0;">BSEA600609 - Révision Transfert Moovapps</div>
<div class="r" style="left:0px;top:91px;width:1649px;height:25px;background:#fff;"></div>
<div class="r" style="left:0px;top:116px;width:1649px;height:1px;background:#c4c4c4;"></div>
<div class="r" style="left:1354px;top:91px;width:56px;height:25px;background:#ffffa5;"></div>
<div class="r" style="left:1410px;top:91px;width:112px;height:25px;background:#efefef;"></div>
<div class="r" style="left:810px;top:91px;width:1px;height:25px;background:#dcdcdc;"></div>
<div class="r" style="left:901px;top:91px;width:1px;height:25px;background:#dcdcdc;"></div>
<div class="r" style="left:992px;top:91px;width:1px;height:25px;background:#dcdcdc;"></div>
<div class="r" style="left:1061px;top:91px;width:1px;height:25px;background:#dcdcdc;"></div>
<div class="r" style="left:1130px;top:91px;width:1px;height:25px;background:#dcdcdc;"></div>
<div class="r" style="left:1186px;top:91px;width:1px;height:25px;background:#dcdcdc;"></div>
<div class="r" style="left:1242px;top:91px;width:1px;height:25px;background:#dcdcdc;"></div>
<div class="r" style="left:1298px;top:91px;width:1px;height:25px;background:#dcdcdc;"></div>
<div class="r" style="left:1354px;top:91px;width:1px;height:25px;background:#dcdcdc;"></div>
<div class="r" style="left:1410px;top:91px;width:1px;height:25px;background:#dcdcdc;"></div>
<div class="r" style="left:1466px;top:91px;width:1px;height:25px;background:#dcdcdc;"></div>
<div class="r" style="left:1522px;top:91px;width:1px;height:25px;background:#dcdcdc;"></div>
<svg class="r" style="left:17px;top:97px" width="16" height="14" viewBox="0 0 16 14"><rect x="1.5" y="1.5" width="4" height="4" fill="none" stroke="#4f5f95" stroke-width="1.1"/><rect x="10.5" y="1.5" width="4" height="4" fill="none" stroke="#4f5f95" stroke-width="1.1"/><rect x="10.5" y="8.5" width="4.2" height="4.2" fill="none" stroke="#4f5f95" stroke-width="1.1"/><path d="M6 3.5h4M7.5 3.5v7h2.5" stroke="#7080b0" fill="none"/></svg>
<div class="t " style="left:139.00px;top:98.00px;font-size:13px;line-height:13px;color:#222;letter-spacing:0.436px;transform:scaleX(1.0689);transform-origin:0 0;">BSEA600609 - révision PID &amp; DSD</div>
<div class="t " style="left:739.00px;top:97.69px;font-size:11px;line-height:11px;color:#8383e0;letter-spacing:0.110px;transform:scaleX(1.0195);transform-origin:0 0;">Technicien</div>
<svg class="r" style="left:793px;top:97px" width="18" height="16" viewBox="0 0 18 16"><path d="M2.5 1.5h12a1.5 1.5 0 0 1 1.5 1.5v7M11 11.5H6l-3 3v-3H2.5A1.5 1.5 0 0 1 1 10V3a1.5 1.5 0 0 1 1.5-1.5" stroke="#5a6a9a" stroke-width="1.1" fill="none"/><path d="M14 9v6M11 12h6" stroke="#1a3070" stroke-width="1.4"/></svg>
<div class="t " style="left:816.25px;top:98.00px;font-size:13px;line-height:13px;color:#111;letter-spacing:0.677px;transform:scaleX(1.1033);transform-origin:0 0;">27/12/2022</div>
<div class="t " style="left:907.25px;top:98.00px;font-size:13px;line-height:13px;color:#111;letter-spacing:0.677px;transform:scaleX(1.1033);transform-origin:0 0;">27/12/2022</div>
<div class="t " style="left:1016.11px;top:97.00px;font-size:13px;line-height:13px;color:#555;letter-spacing:0.630px;transform:scaleX(1.0750);transform-origin:0 0;">0,5</div>
<div class="t " style="left:1091.89px;top:97.00px;font-size:13px;line-height:13px;color:#555;">0</div>
<div class="r" style="left:1134px;top:92px;width:46px;height:21px;border:1px solid #7b9ad8;border-radius:4px;background:#fff;"></div>
<div class="t " style="left:1154.66px;top:98.84px;font-size:12px;line-height:12px;color:#222;">0</div>
<div class="r" style="left:1190px;top:92px;width:46px;height:21px;border:1px solid #7b9ad8;border-radius:4px;background:#fff;"></div>
<div class="t " style="left:1210.66px;top:98.84px;font-size:12px;line-height:12px;color:#222;">0</div>
<div class="r" style="left:1246px;top:92px;width:46px;height:21px;border:1px solid #7b9ad8;border-radius:4px;background:#fff;"></div>
<div class="t " style="left:1266.66px;top:98.84px;font-size:12px;line-height:12px;color:#222;">0</div>
<div class="r" style="left:1302px;top:92px;width:46px;height:21px;border:1px solid #7b9ad8;border-radius:4px;background:#fff;"></div>
<div class="t " style="left:1322.66px;top:98.84px;font-size:12px;line-height:12px;color:#222;">0</div>
<div class="r" style="left:1358px;top:92px;width:46px;height:21px;border:1px solid #7b9ad8;border-radius:4px;background:#fff;"></div>
<div class="t " style="left:1378.66px;top:98.84px;font-size:12px;line-height:12px;color:#222;">0</div>
<div class="r" style="left:1414px;top:92px;width:46px;height:21px;border:1px solid #7b9ad8;border-radius:4px;background:#fff;"></div>
<div class="t " style="left:1434.66px;top:98.84px;font-size:12px;line-height:12px;color:#222;">0</div>
<div class="r" style="left:1470px;top:92px;width:46px;height:21px;border:1px solid #7b9ad8;border-radius:4px;background:#fff;"></div>
<div class="t " style="left:1490.66px;top:98.84px;font-size:12px;line-height:12px;color:#222;">0</div>
<div class="r" style="left:1527px;top:92px;width:62px;height:21px;border:1px solid #7b9ad8;border-radius:4px;background:#fff;"></div>
<div class="t " style="left:1548.91px;top:98.84px;font-size:12px;line-height:12px;color:#444;letter-spacing:0.582px;transform:scaleX(1.0750);transform-origin:0 0;">0,5</div>
<div class="t " style="left:1614.61px;top:97.00px;font-size:13px;line-height:13px;color:#555;letter-spacing:0.630px;transform:scaleX(1.0750);transform-origin:0 0;">0,5</div>
<div class="r" style="left:0px;top:117px;width:1649px;height:25px;background:#d5e2f5;"></div>
<div class="r" style="left:0px;top:142px;width:1649px;height:1px;background:#c4c4c4;"></div>
<div class="r" style="left:1354px;top:117px;width:56px;height:25px;background:#ffffa5;"></div>
<div class="r" style="left:1410px;top:117px;width:112px;height:25px;background:#efefef;"></div>
<div class="r" style="left:810px;top:117px;width:1px;height:25px;background:#dcdcdc;"></div>
<div class="r" style="left:901px;top:117px;width:1px;height:25px;background:#dcdcdc;"></div>
<div class="r" style="left:992px;top:117px;width:1px;height:25px;background:#dcdcdc;"></div>
<div class="r" style="left:1061px;top:117px;width:1px;height:25px;background:#dcdcdc;"></div>
<div class="r" style="left:1130px;top:117px;width:1px;height:25px;background:#dcdcdc;"></div>
<div class="r" style="left:1186px;top:117px;width:1px;height:25px;background:#dcdcdc;"></div>
<div class="r" style="left:1242px;top:117px;width:1px;height:25px;background:#dcdcdc;"></div>
<div class="r" style="left:1298px;top:117px;width:1px;height:25px;background:#dcdcdc;"></div>
<div class="r" style="left:1354px;top:117px;width:1px;height:25px;background:#dcdcdc;"></div>
<div class="r" style="left:1410px;top:117px;width:1px;height:25px;background:#dcdcdc;"></div>
<div class="r" style="left:1466px;top:117px;width:1px;height:25px;background:#dcdcdc;"></div>
<div class="r" style="left:1522px;top:117px;width:1px;height:25px;background:#dcdcdc;"></div>
<svg class="r" style="left:17px;top:122px" width="16" height="16" viewBox="0 0 16 16"><path d="M8.00,0.40 L9.48,0.55 L10.22,2.64 L11.22,3.18 L13.37,2.63 L14.32,3.78 L13.36,5.78 L13.69,6.87 L15.60,8.00 L15.45,9.48 L13.36,10.22 L12.82,11.22 L13.37,13.37 L12.22,14.32 L10.22,13.36 L9.13,13.69 L8.00,15.60 L6.52,15.45 L5.78,13.36 L4.78,12.82 L2.63,13.37 L1.68,12.22 L2.64,10.22 L2.31,9.13 L0.40,8.00 L0.55,6.52 L2.64,5.78 L3.18,4.78 L2.63,2.63 L3.78,1.68 L5.78,2.64 L6.87,2.31Z" fill="none" stroke="#5a6a9a" stroke-width="1.1" stroke-linejoin="round"/><circle cx="8" cy="8" r="3" fill="none" stroke="#5a6a9a" stroke-width="1.1"/></svg>
<svg class="r" style="left:75px;top:123px" width="12" height="12" viewBox="0 0 12 12"><rect x="0.5" y="0.5" width="11" height="11" rx="2" fill="none" stroke="#8d9dc9"/><path d="M3 6h6" stroke="#5a6a9a" stroke-width="1.6"/></svg>
<div class="t " style="left:98.00px;top:124.00px;font-size:13px;line-height:13px;color:#111;font-weight:bold;letter-spacing:0.636px;transform:scaleX(1.0879);transform-origin:0 0;">BSEA600612 - ORIENTAL REEFER</div>
<div class="t " style="left:1147.16px;top:123.50px;font-size:13px;line-height:13px;color:#000;font-weight:bold;letter-spacing:0.821px;transform:scaleX(1.1000);transform-origin:0 0;">0,5</div>
<div class="t " style="left:1210.39px;top:123.50px;font-size:13px;line-height:13px;color:#000;font-weight:bold;">0</div>
<div class="t " style="left:1259.16px;top:123.50px;font-size:13px;line-height:13px;color:#000;font-weight:bold;letter-spacing:0.821px;transform:scaleX(1.1000);transform-origin:0 0;">0,5</div>
<div class="t " style="left:1322.39px;top:123.50px;font-size:13px;line-height:13px;color:#000;font-weight:bold;">0</div>
<div class="t " style="left:1378.39px;top:123.50px;font-size:13px;line-height:13px;color:#000;font-weight:bold;">0</div>
<div class="t " style="left:1434.39px;top:123.50px;font-size:13px;line-height:13px;color:#000;font-weight:bold;">0</div>
<div class="t " style="left:1490.39px;top:123.50px;font-size:13px;line-height:13px;color:#000;font-weight:bold;">0</div>
<div class="t " style="left:1587.39px;top:123.50px;font-size:13px;line-height:13px;color:#000;font-weight:bold;">1</div>
<div class="r" style="left:0px;top:143px;width:1649px;height:25px;background:#d5e2f5;"></div>
<div class="r" style="left:0px;top:168px;width:1649px;height:1px;background:#c4c4c4;"></div>
<div class="r" style="left:1354px;top:143px;width:56px;height:25px;background:#ffffa5;"></div>
<div class="r" style="left:1410px;top:143px;width:112px;height:25px;background:#efefef;"></div>
<div class="r" style="left:810px;top:143px;width:1px;height:25px;background:#dcdcdc;"></div>
<div class="r" style="left:901px;top:143px;width:1px;height:25px;background:#dcdcdc;"></div>
<div class="r" style="left:992px;top:143px;width:1px;height:25px;background:#dcdcdc;"></div>
<div class="r" style="left:1061px;top:143px;width:1px;height:25px;background:#dcdcdc;"></div>
<div class="r" style="left:1130px;top:143px;width:1px;height:25px;background:#dcdcdc;"></div>
<div class="r" style="left:1186px;top:143px;width:1px;height:25px;background:#dcdcdc;"></div>
<div class="r" style="left:1242px;top:143px;width:1px;height:25px;background:#dcdcdc;"></div>
<div class="r" style="left:1298px;top:143px;width:1px;height:25px;background:#dcdcdc;"></div>
<div class="r" style="left:1354px;top:143px;width:1px;height:25px;background:#dcdcdc;"></div>
<div class="r" style="left:1410px;top:143px;width:1px;height:25px;background:#dcdcdc;"></div>
<div class="r" style="left:1466px;top:143px;width:1px;height:25px;background:#dcdcdc;"></div>
<div class="r" style="left:1522px;top:143px;width:1px;height:25px;background:#dcdcdc;"></div>
<svg class="r" style="left:17px;top:149px" width="16" height="14" viewBox="0 0 16 14"><rect x="1.5" y="1.5" width="4" height="4" fill="none" stroke="#4f5f95" stroke-width="1.1"/><rect x="10.5" y="1.5" width="4" height="4" fill="none" stroke="#4f5f95" stroke-width="1.1"/><rect x="10.5" y="8.5" width="4.2" height="4.2" fill="none" stroke="#4f5f95" stroke-width="1.1"/><path d="M6 3.5h4M7.5 3.5v7h2.5" stroke="#7080b0" fill="none"/></svg>
<svg class="r" style="left:91px;top:149px" width="12" height="12" viewBox="0 0 12 12"><rect x="0.5" y="0.5" width="11" height="11" rx="2" fill="none" stroke="#8d9dc9"/><path d="M3 6h6" stroke="#5a6a9a" stroke-width="1.6"/></svg>
<div class="t " style="left:114.00px;top:150.00px;font-size:13px;line-height:13px;color:#111;font-weight:bold;letter-spacing:0.690px;transform:scaleX(1.1115);transform-origin:0 0;">BSEA600612 - Etudes (suivi-&gt; Lancement OF)</div>
<div class="r" style="left:0px;top:169px;width:1649px;height:25px;background:#d5e2f5;"></div>
<div class="r" style="left:0px;top:194px;width:1649px;height:1px;background:#c4c4c4;"></div>
<div class="r" style="left:1354px;top:169px;width:56px;height:25px;background:#ffffa5;"></div>
<div class="r" style="left:1410px;top:169px;width:112px;height:25px;background:#efefef;"></div>
<div class="r" style="left:810px;top:169px;width:1px;height:25px;background:#dcdcdc;"></div>
<div class="r" style="left:901px;top:169px;width:1px;height:25px;background:#dcdcdc;"></div>
<div class="r" style="left:992px;top:169px;width:1px;height:25px;background:#dcdcdc;"></div>
<div class="r" style="left:1061px;top:169px;width:1px;height:25px;background:#dcdcdc;"></div>
<div class="r" style="left:1130px;top:169px;width:1px;height:25px;background:#dcdcdc;"></div>
<div class="r" style="left:1186px;top:169px;width:1px;height:25px;background:#dcdcdc;"></div>
<div class="r" style="left:1242px;top:169px;width:1px;height:25px;background:#dcdcdc;"></div>
<div class="r" style="left:1298px;top:169px;width:1px;height:25px;background:#dcdcdc;"></div>
<div class="r" style="left:1354px;top:169px;width:1px;height:25px;background:#dcdcdc;"></div>
<div class="r" style="left:1410px;top:169px;width:1px;height:25px;background:#dcdcdc;"></div>
<div class="r" style="left:1466px;top:169px;width:1px;height:25px;background:#dcdcdc;"></div>
<div class="r" style="left:1522px;top:169px;width:1px;height:25px;background:#dcdcdc;"></div>
<svg class="r" style="left:17px;top:175px" width="16" height="14" viewBox="0 0 16 14"><rect x="1.5" y="1.5" width="4" height="4" fill="none" stroke="#4f5f95" stroke-width="1.1"/><rect x="10.5" y="1.5" width="4" height="4" fill="none" stroke="#4f5f95" stroke-width="1.1"/><rect x="10.5" y="8.5" width="4.2" height="4.2" fill="none" stroke="#4f5f95" stroke-width="1.1"/><path d="M6 3.5h4M7.5 3.5v7h2.5" stroke="#7080b0" fill="none"/></svg>
<svg class="r" style="left:107px;top:175px" width="12" height="12" viewBox="0 0 12 12"><rect x="0.5" y="0.5" width="11" height="11" rx="2" fill="none" stroke="#8d9dc9"/><path d="M3 6h6" stroke="#5a6a9a" stroke-width="1.6"/></svg>
<div class="t " style="left:130.00px;top:176.00px;font-size:13px;line-height:13px;color:#111;font-weight:bold;letter-spacing:0.630px;transform:scaleX(1.0984);transform-origin:0 0;">Transfert Moovapps Approval</div>
<div class="t " style="left:739.00px;top:175.69px;font-size:11px;line-height:11px;color:#8383e0;letter-spacing:0.110px;transform:scaleX(1.0195);transform-origin:0 0;">Technicien</div>
<svg class="r" style="left:793px;top:175px" width="18" height="16" viewBox="0 0 18 16"><path d="M2.5 1.5h12a1.5 1.5 0 0 1 1.5 1.5v7M11 11.5H6l-3 3v-3H2.5A1.5 1.5 0 0 1 1 10V3a1.5 1.5 0 0 1 1.5-1.5" stroke="#5a6a9a" stroke-width="1.1" fill="none"/><path d="M14 9v6M11 12h6" stroke="#1a3070" stroke-width="1.4"/></svg>
<div class="t " style="left:816.25px;top:176.00px;font-size:13px;line-height:13px;color:#111;letter-spacing:0.677px;transform:scaleX(1.1033);transform-origin:0 0;">19/12/2022</div>
<div class="t " style="left:907.25px;top:176.00px;font-size:13px;line-height:13px;color:#111;letter-spacing:0.677px;transform:scaleX(1.1033);transform-origin:0 0;">21/12/2022</div>
<div class="t " style="left:1016.11px;top:175.00px;font-size:13px;line-height:13px;color:#555;letter-spacing:0.630px;transform:scaleX(1.0750);transform-origin:0 0;">0,5</div>
<div class="t " style="left:1085.11px;top:175.00px;font-size:13px;line-height:13px;color:#555;letter-spacing:0.630px;transform:scaleX(1.0750);transform-origin:0 0;">0,5</div>
<div class="t " style="left:1154.66px;top:176.84px;font-size:12px;line-height:12px;color:#666;">0</div>
<div class="t " style="left:1210.66px;top:176.84px;font-size:12px;line-height:12px;color:#666;">0</div>
<div class="r" style="left:1246px;top:170px;width:48px;height:23px;background:#ffff99;border-radius:4px;"></div>
<div class="t " style="left:1260.41px;top:176.84px;font-size:12px;line-height:12px;color:#666;letter-spacing:0.582px;transform:scaleX(1.0750);transform-origin:0 0;">0,5</div>
<div class="t " style="left:1322.66px;top:176.84px;font-size:12px;line-height:12px;color:#666;">0</div>
<div class="t " style="left:1378.66px;top:176.84px;font-size:12px;line-height:12px;color:#666;">0</div>
<div class="t " style="left:1434.66px;top:176.84px;font-size:12px;line-height:12px;color:#666;">0</div>
<div class="t " style="left:1490.66px;top:176.84px;font-size:12px;line-height:12px;color:#666;">0</div>
<div class="t " style="left:1555.16px;top:176.84px;font-size:12px;line-height:12px;color:#666;">0</div>
<div class="t " style="left:1614.61px;top:175.00px;font-size:13px;line-height:13px;color:#555;letter-spacing:0.630px;transform:scaleX(1.0750);transform-origin:0 0;">0,5</div>
<div class="r" style="left:0px;top:195px;width:1649px;height:25px;background:#d5e2f5;"></div>
<div class="r" style="left:0px;top:220px;width:1649px;height:1px;background:#c4c4c4;"></div>
<div class="r" style="left:1354px;top:195px;width:56px;height:25px;background:#ffffa5;"></div>
<div class="r" style="left:1410px;top:195px;width:112px;height:25px;background:#efefef;"></div>
<div class="r" style="left:810px;top:195px;width:1px;height:25px;background:#dcdcdc;"></div>
<div class="r" style="left:901px;top:195px;width:1px;height:25px;background:#dcdcdc;"></div>
<div class="r" style="left:992px;top:195px;width:1px;height:25px;background:#dcdcdc;"></div>
<div class="r" style="left:1061px;top:195px;width:1px;height:25px;background:#dcdcdc;"></div>
<div class="r" style="left:1130px;top:195px;width:1px;height:25px;background:#dcdcdc;"></div>
<div class="r" style="left:1186px;top:195px;width:1px;height:25px;background:#dcdcdc;"></div>
<div class="r" style="left:1242px;top:195px;width:1px;height:25px;background:#dcdcdc;"></div>
<div class="r" style="left:1298px;top:195px;width:1px;height:25px;background:#dcdcdc;"></div>
<div class="r" style="left:1354px;top:195px;width:1px;height:25px;background:#dcdcdc;"></div>
<div class="r" style="left:1410px;top:195px;width:1px;height:25px;background:#dcdcdc;"></div>
<div class="r" style="left:1466px;top:195px;width:1px;height:25px;background:#dcdcdc;"></div>
<div class="r" style="left:1522px;top:195px;width:1px;height:25px;background:#dcdcdc;"></div>
<svg class="r" style="left:17px;top:201px" width="16" height="14" viewBox="0 0 16 14"><rect x="1.5" y="1.5" width="4" height="4" fill="none" stroke="#4f5f95" stroke-width="1.1"/><rect x="10.5" y="1.5" width="4" height="4" fill="none" stroke="#4f5f95" stroke-width="1.1"/><rect x="10.5" y="8.5" width="4.2" height="4.2" fill="none" stroke="#4f5f95" stroke-width="1.1"/><path d="M6 3.5h4M7.5 3.5v7h2.5" stroke="#7080b0" fill="none"/></svg>
<svg class="r" style="left:123px;top:201px" width="12" height="12" viewBox="0 0 12 12"><rect x="0.5" y="0.5" width="11" height="11" rx="2" fill="none" stroke="#8d9dc9"/><path d="M3 6h6" stroke="#5a6a9a" stroke-width="1.6"/></svg>
<div class="t " style="left:146.00px;top:202.00px;font-size:13px;line-height:13px;color:#111;font-weight:bold;letter-spacing:0.621px;transform:scaleX(1.0972);transform-origin:0 0;">Ok pour transfert MoovAps</div>
<div class="r" style="left:0px;top:221px;width:1649px;height:25px;background:#fffba6;"></div>
<div class="r" style="left:0px;top:246px;width:1649px;height:1px;background:#c4c4c4;"></div>
<div class="r" style="left:1130px;top:221px;width:224px;height:25px;background:#fffba6;"></div>
<div class="r" style="left:1354px;top:221px;width:56px;height:25px;background:#ffffa5;"></div>
<div class="r" style="left:1410px;top:221px;width:112px;height:25px;background:#efefef;"></div>
<div class="r" style="left:810px;top:221px;width:1px;height:25px;background:#dcdcdc;"></div>
<div class="r" style="left:901px;top:221px;width:1px;height:25px;background:#dcdcdc;"></div>
<div class="r" style="left:992px;top:221px;width:1px;height:25px;background:#dcdcdc;"></div>
<div class="r" style="left:1061px;top:221px;width:1px;height:25px;background:#dcdcdc;"></div>
<div class="r" style="left:1130px;top:221px;width:1px;height:25px;background:#dcdcdc;"></div>
<div class="r" style="left:1186px;top:221px;width:1px;height:25px;background:#dcdcdc;"></div>
<div class="r" style="left:1242px;top:221px;width:1px;height:25px;background:#dcdcdc;"></div>
<div class="r" style="left:1298px;top:221px;width:1px;height:25px;background:#dcdcdc;"></div>
<div class="r" style="left:1354px;top:221px;width:1px;height:25px;background:#dcdcdc;"></div>
<div class="r" style="left:1410px;top:221px;width:1px;height:25px;background:#dcdcdc;"></div>
<div class="r" style="left:1466px;top:221px;width:1px;height:25px;background:#dcdcdc;"></div>
<div class="r" style="left:1522px;top:221px;width:1px;height:25px;background:#dcdcdc;"></div>
<svg class="r" style="left:17px;top:227px" width="16" height="14" viewBox="0 0 16 14"><rect x="1.5" y="1.5" width="4" height="4" fill="none" stroke="#4f5f95" stroke-width="1.1"/><rect x="10.5" y="1.5" width="4" height="4" fill="none" stroke="#4f5f95" stroke-width="1.1"/><rect x="10.5" y="8.5" width="4.2" height="4.2" fill="none" stroke="#4f5f95" stroke-width="1.1"/><path d="M6 3.5h4M7.5 3.5v7h2.5" stroke="#7080b0" fill="none"/></svg>
<div class="t " style="left:156.00px;top:228.00px;font-size:13px;line-height:13px;color:#444;letter-spacing:0.351px;transform:scaleX(1.0581);transform-origin:0 0;">Réalisation PID</div>
<div class="t " style="left:739.00px;top:227.69px;font-size:11px;line-height:11px;color:#8383e0;letter-spacing:0.110px;transform:scaleX(1.0195);transform-origin:0 0;">Technicien</div>
<svg class="r" style="left:793px;top:227px" width="18" height="16" viewBox="0 0 18 16"><path d="M2.5 1.5h12a1.5 1.5 0 0 1 1.5 1.5v7M11 11.5H6l-3 3v-3H2.5A1.5 1.5 0 0 1 1 10V3a1.5 1.5 0 0 1 1.5-1.5" stroke="#5a6a9a" stroke-width="1.1" fill="none"/><path d="M14 9v6M11 12h6" stroke="#1a3070" stroke-width="1.4"/></svg>
<div class="t " style="left:816.25px;top:228.00px;font-size:13px;line-height:13px;color:#111;letter-spacing:0.677px;transform:scaleX(1.1033);transform-origin:0 0;">19/12/2022</div>
<div class="t " style="left:907.25px;top:228.00px;font-size:13px;line-height:13px;color:#111;letter-spacing:0.677px;transform:scaleX(1.1033);transform-origin:0 0;">19/12/2022</div>
<div class="t " style="left:1016.11px;top:227.00px;font-size:13px;line-height:13px;color:#555;letter-spacing:0.630px;transform:scaleX(1.0750);transform-origin:0 0;">0,5</div>
<div class="t " style="left:1085.11px;top:227.00px;font-size:13px;line-height:13px;color:#555;letter-spacing:0.630px;transform:scaleX(1.0750);transform-origin:0 0;">0,5</div>
<div class="t " style="left:1148.41px;top:228.84px;font-size:12px;line-height:12px;color:#666;letter-spacing:0.582px;transform:scaleX(1.0750);transform-origin:0 0;">0,5</div>
<div class="t " style="left:1210.66px;top:228.84px;font-size:12px;line-height:12px;color:#666;">0</div>
<div class="t " style="left:1266.66px;top:228.84px;font-size:12px;line-height:12px;color:#666;">0</div>
<div class="t " style="left:1322.66px;top:228.84px;font-size:12px;line-height:12px;color:#666;">0</div>
<div class="t " style="left:1378.66px;top:228.84px;font-size:12px;line-height:12px;color:#666;">0</div>
<div class="t " style="left:1434.66px;top:228.84px;font-size:12px;line-height:12px;color:#666;">0</div>
<div class="t " style="left:1490.66px;top:228.84px;font-size:12px;line-height:12px;color:#666;">0</div>
<div class="t " style="left:1555.16px;top:228.84px;font-size:12px;line-height:12px;color:#666;">0</div>
<div class="t " style="left:1614.61px;top:227.00px;font-size:13px;line-height:13px;color:#555;letter-spacing:0.630px;transform:scaleX(1.0750);transform-origin:0 0;">0,5</div>
<div class="r" style="left:0px;top:247px;width:1649px;height:25px;background:#d5e2f5;"></div>
<div class="r" style="left:0px;top:272px;width:1649px;height:1px;background:#c4c4c4;"></div>
<div class="r" style="left:1354px;top:247px;width:56px;height:25px;background:#ffffa5;"></div>
<div class="r" style="left:1410px;top:247px;width:112px;height:25px;background:#efefef;"></div>
<div class="r" style="left:810px;top:247px;width:1px;height:25px;background:#dcdcdc;"></div>
<div class="r" style="left:901px;top:247px;width:1px;height:25px;background:#dcdcdc;"></div>
<div class="r" style="left:992px;top:247px;width:1px;height:25px;background:#dcdcdc;"></div>
<div class="r" style="left:1061px;top:247px;width:1px;height:25px;background:#dcdcdc;"></div>
<div class="r" style="left:1130px;top:247px;width:1px;height:25px;background:#dcdcdc;"></div>
<div class="r" style="left:1186px;top:247px;width:1px;height:25px;background:#dcdcdc;"></div>
<div class="r" style="left:1242px;top:247px;width:1px;height:25px;background:#dcdcdc;"></div>
<div class="r" style="left:1298px;top:247px;width:1px;height:25px;background:#dcdcdc;"></div>
<div class="r" style="left:1354px;top:247px;width:1px;height:25px;background:#dcdcdc;"></div>
<div class="r" style="left:1410px;top:247px;width:1px;height:25px;background:#dcdcdc;"></div>
<div class="r" style="left:1466px;top:247px;width:1px;height:25px;background:#dcdcdc;"></div>
<div class="r" style="left:1522px;top:247px;width:1px;height:25px;background:#dcdcdc;"></div>
<svg class="r" style="left:17px;top:253px" width="16" height="14" viewBox="0 0 16 14"><rect x="1.5" y="1.5" width="4" height="4" fill="none" stroke="#4f5f95" stroke-width="1.1"/><rect x="10.5" y="1.5" width="4" height="4" fill="none" stroke="#4f5f95" stroke-width="1.1"/><rect x="10.5" y="8.5" width="4.2" height="4.2" fill="none" stroke="#4f5f95" stroke-width="1.1"/><path d="M6 3.5h4M7.5 3.5v7h2.5" stroke="#7080b0" fill="none"/></svg>
<svg class="r" style="left:91px;top:253px" width="12" height="12" viewBox="0 0 12 12"><rect x="0.5" y="0.5" width="11" height="11" rx="2" fill="none" stroke="#8d9dc9"/><path d="M3 6h6" stroke="#5a6a9a" stroke-width="1.6"/></svg>
<div class="t " style="left:114.00px;top:254.00px;font-size:13px;line-height:13px;color:#111;font-weight:bold;letter-spacing:0.672px;transform:scaleX(1.1077);transform-origin:0 0;">BSEA600612 - As built</div>
<div class="r" style="left:0px;top:273px;width:1649px;height:25px;background:#d5e2f5;"></div>
<div class="r" style="left:0px;top:298px;width:1649px;height:1px;background:#c4c4c4;"></div>
<div class="r" style="left:1354px;top:273px;width:56px;height:25px;background:#ffffa5;"></div>
<div class="r" style="left:1410px;top:273px;width:112px;height:25px;background:#efefef;"></div>
<div class="r" style="left:810px;top:273px;width:1px;height:25px;background:#dcdcdc;"></div>
<div class="r" style="left:901px;top:273px;width:1px;height:25px;background:#dcdcdc;"></div>
<div class="r" style="left:992px;top:273px;width:1px;height:25px;background:#dcdcdc;"></div>
<div class="r" style="left:1061px;top:273px;width:1px;height:25px;background:#dcdcdc;"></div>
<div class="r" style="left:1130px;top:273px;width:1px;height:25px;background:#dcdcdc;"></div>
<div class="r" style="left:1186px;top:273px;width:1px;height:25px;background:#dcdcdc;"></div>
<div class="r" style="left:1242px;top:273px;width:1px;height:25px;background:#dcdcdc;"></div>
<div class="r" style="left:1298px;top:273px;width:1px;height:25px;background:#dcdcdc;"></div>
<div class="r" style="left:1354px;top:273px;width:1px;height:25px;background:#dcdcdc;"></div>
<div class="r" style="left:1410px;top:273px;width:1px;height:25px;background:#dcdcdc;"></div>
<div class="r" style="left:1466px;top:273px;width:1px;height:25px;background:#dcdcdc;"></div>
<div class="r" style="left:1522px;top:273px;width:1px;height:25px;background:#dcdcdc;"></div>
<svg class="r" style="left:17px;top:279px" width="16" height="14" viewBox="0 0 16 14"><rect x="1.5" y="1.5" width="4" height="4" fill="none" stroke="#4f5f95" stroke-width="1.1"/><rect x="10.5" y="1.5" width="4" height="4" fill="none" stroke="#4f5f95" stroke-width="1.1"/><rect x="10.5" y="8.5" width="4.2" height="4.2" fill="none" stroke="#4f5f95" stroke-width="1.1"/><path d="M6 3.5h4M7.5 3.5v7h2.5" stroke="#7080b0" fill="none"/></svg>
<svg class="r" style="left:107px;top:279px" width="12" height="12" viewBox="0 0 12 12"><rect x="0.5" y="0.5" width="11" height="11" rx="2" fill="none" stroke="#8d9dc9"/><path d="M3 6h6" stroke="#5a6a9a" stroke-width="1.6"/></svg>
<div class="t " style="left:130.00px;top:280.00px;font-size:13px;line-height:13px;color:#111;font-weight:bold;letter-spacing:0.647px;transform:scaleX(1.1021);transform-origin:0 0;">BSEA600612 - Révision Transfert Moovapps</div>
<div class="r" style="left:0px;top:299px;width:1649px;height:25px;background:#fff;"></div>
<div class="r" style="left:0px;top:324px;width:1649px;height:1px;background:#c4c4c4;"></div>
<div class="r" style="left:1354px;top:299px;width:56px;height:25px;background:#ffffa5;"></div>
<div class="r" style="left:1410px;top:299px;width:112px;height:25px;background:#efefef;"></div>
<div class="r" style="left:810px;top:299px;width:1px;height:25px;background:#dcdcdc;"></div>
<div class="r" style="left:901px;top:299px;width:1px;height:25px;background:#dcdcdc;"></div>
<div class="r" style="left:992px;top:299px;width:1px;height:25px;background:#dcdcdc;"></div>
<div class="r" style="left:1061px;top:299px;width:1px;height:25px;background:#dcdcdc;"></div>
<div class="r" style="left:1130px;top:299px;width:1px;height:25px;background:#dcdcdc;"></div>
<div class="r" style="left:1186px;top:299px;width:1px;height:25px;background:#dcdcdc;"></div>
<div class="r" style="left:1242px;top:299px;width:1px;height:25px;background:#dcdcdc;"></div>
<div class="r" style="left:1298px;top:299px;width:1px;height:25px;background:#dcdcdc;"></div>
<div class="r" style="left:1354px;top:299px;width:1px;height:25px;background:#dcdcdc;"></div>
<div class="r" style="left:1410px;top:299px;width:1px;height:25px;background:#dcdcdc;"></div>
<div class="r" style="left:1466px;top:299px;width:1px;height:25px;background:#dcdcdc;"></div>
<div class="r" style="left:1522px;top:299px;width:1px;height:25px;background:#dcdcdc;"></div>
<svg class="r" style="left:17px;top:305px" width="16" height="14" viewBox="0 0 16 14"><rect x="1.5" y="1.5" width="4" height="4" fill="none" stroke="#4f5f95" stroke-width="1.1"/><rect x="10.5" y="1.5" width="4" height="4" fill="none" stroke="#4f5f95" stroke-width="1.1"/><rect x="10.5" y="8.5" width="4.2" height="4.2" fill="none" stroke="#4f5f95" stroke-width="1.1"/><path d="M6 3.5h4M7.5 3.5v7h2.5" stroke="#7080b0" fill="none"/></svg>
<div class="t " style="left:139.00px;top:306.00px;font-size:13px;line-height:13px;color:#222;letter-spacing:0.436px;transform:scaleX(1.0689);transform-origin:0 0;">BSEA600612 - révision PID &amp; DSD</div>
<div class="t " style="left:739.00px;top:305.69px;font-size:11px;line-height:11px;color:#8383e0;letter-spacing:0.110px;transform:scaleX(1.0195);transform-origin:0 0;">Technicien</div>
<svg class="r" style="left:793px;top:305px" width="18" height="16" viewBox="0 0 18 16"><path d="M2.5 1.5h12a1.5 1.5 0 0 1 1.5 1.5v7M11 11.5H6l-3 3v-3H2.5A1.5 1.5 0 0 1 1 10V3a1.5 1.5 0 0 1 1.5-1.5" stroke="#5a6a9a" stroke-width="1.1" fill="none"/><path d="M14 9v6M11 12h6" stroke="#1a3070" stroke-width="1.4"/></svg>
<div class="t " style="left:816.25px;top:306.00px;font-size:13px;line-height:13px;color:#111;letter-spacing:0.677px;transform:scaleX(1.1033);transform-origin:0 0;">27/12/2022</div>
<div class="t " style="left:907.25px;top:306.00px;font-size:13px;line-height:13px;color:#111;letter-spacing:0.677px;transform:scaleX(1.1033);transform-origin:0 0;">27/12/2022</div>
<div class="t " style="left:1016.11px;top:305.00px;font-size:13px;line-height:13px;color:#555;letter-spacing:0.630px;transform:scaleX(1.0750);transform-origin:0 0;">0,5</div>
<div class="t " style="left:1091.89px;top:305.00px;font-size:13px;line-height:13px;color:#555;">0</div>
<div class="r" style="left:1134px;top:300px;width:46px;height:21px;border:1px solid #7b9ad8;border-radius:4px;background:#fff;"></div>
<div class="t " style="left:1154.66px;top:306.84px;font-size:12px;line-height:12px;color:#222;">0</div>
<div class="r" style="left:1190px;top:300px;width:46px;height:21px;border:1px solid #7b9ad8;border-radius:4px;background:#fff;"></div>
<div class="t " style="left:1210.66px;top:306.84px;font-size:12px;line-height:12px;color:#222;">0</div>
<div class="r" style="left:1246px;top:300px;width:46px;height:21px;border:1px solid #7b9ad8;border-radius:4px;background:#fff;"></div>
<div class="t " style="left:1266.66px;top:306.84px;font-size:12px;line-height:12px;color:#222;">0</div>
<div class="r" style="left:1302px;top:300px;width:46px;height:21px;border:1px solid #7b9ad8;border-radius:4px;background:#fff;"></div>
<div class="t " style="left:1322.66px;top:306.84px;font-size:12px;line-height:12px;color:#222;">0</div>
<div class="r" style="left:1358px;top:300px;width:46px;height:21px;border:1px solid #7b9ad8;border-radius:4px;background:#fff;"></div>
<div class="t " style="left:1378.66px;top:306.84px;font-size:12px;line-height:12px;color:#222;">0</div>
<div class="r" style="left:1414px;top:300px;width:46px;height:21px;border:1px solid #7b9ad8;border-radius:4px;background:#fff;"></div>
<div class="t " style="left:1434.66px;top:306.84px;font-size:12px;line-height:12px;color:#222;">0</div>
<div class="r" style="left:1470px;top:300px;width:46px;height:21px;border:1px solid #7b9ad8;border-radius:4px;background:#fff;"></div>
<div class="t " style="left:1490.66px;top:306.84px;font-size:12px;line-height:12px;color:#222;">0</div>
<div class="r" style="left:1527px;top:300px;width:62px;height:21px;border:1px solid #7b9ad8;border-radius:4px;background:#fff;"></div>
<div class="t " style="left:1548.91px;top:306.84px;font-size:12px;line-height:12px;color:#444;letter-spacing:0.582px;transform:scaleX(1.0750);transform-origin:0 0;">0,5</div>
<div class="t " style="left:1614.61px;top:305.00px;font-size:13px;line-height:13px;color:#555;letter-spacing:0.630px;transform:scaleX(1.0750);transform-origin:0 0;">0,5</div>
<div class="r" style="left:0px;top:325px;width:1649px;height:25px;background:#d5e2f5;"></div>
<div class="r" style="left:0px;top:350px;width:1649px;height:1px;background:#c4c4c4;"></div>
<div class="r" style="left:1354px;top:325px;width:56px;height:25px;background:#ffffa5;"></div>
<div class="r" style="left:1410px;top:325px;width:112px;height:25px;background:#efefef;"></div>
<div class="r" style="left:810px;top:325px;width:1px;height:25px;background:#dcdcdc;"></div>
<div class="r" style="left:901px;top:325px;width:1px;height:25px;background:#dcdcdc;"></div>
<div class="r" style="left:992px;top:325px;width:1px;height:25px;background:#dcdcdc;"></div>
<div class="r" style="left:1061px;top:325px;width:1px;height:25px;background:#dcdcdc;"></div>
<div class="r" style="left:1130px;top:325px;width:1px;height:25px;background:#dcdcdc;"></div>
<div class="r" style="left:1186px;top:325px;width:1px;height:25px;background:#dcdcdc;"></div>
<div class="r" style="left:1242px;top:325px;width:1px;height:25px;background:#dcdcdc;"></div>
<div class="r" style="left:1298px;top:325px;width:1px;height:25px;background:#dcdcdc;"></div>
<div class="r" style="left:1354px;top:325px;width:1px;height:25px;background:#dcdcdc;"></div>
<div class="r" style="left:1410px;top:325px;width:1px;height:25px;background:#dcdcdc;"></div>
<div class="r" style="left:1466px;top:325px;width:1px;height:25px;background:#dcdcdc;"></div>
<div class="r" style="left:1522px;top:325px;width:1px;height:25px;background:#dcdcdc;"></div>
<svg class="r" style="left:17px;top:330px" width="16" height="16" viewBox="0 0 16 16"><path d="M8.00,0.40 L9.48,0.55 L10.22,2.64 L11.22,3.18 L13.37,2.63 L14.32,3.78 L13.36,5.78 L13.69,6.87 L15.60,8.00 L15.45,9.48 L13.36,10.22 L12.82,11.22 L13.37,13.37 L12.22,14.32 L10.22,13.36 L9.13,13.69 L8.00,15.60 L6.52,15.45 L5.78,13.36 L4.78,12.82 L2.63,13.37 L1.68,12.22 L2.64,10.22 L2.31,9.13 L0.40,8.00 L0.55,6.52 L2.64,5.78 L3.18,4.78 L2.63,2.63 L3.78,1.68 L5.78,2.64 L6.87,2.31Z" fill="none" stroke="#5a6a9a" stroke-width="1.1" stroke-linejoin="round"/><circle cx="8" cy="8" r="3" fill="none" stroke="#5a6a9a" stroke-width="1.1"/></svg>
<svg class="r" style="left:75px;top:331px" width="12" height="12" viewBox="0 0 12 12"><rect x="0.5" y="0.5" width="11" height="11" rx="2" fill="none" stroke="#8d9dc9"/><path d="M3 6h6" stroke="#5a6a9a" stroke-width="1.6"/></svg>
<div class="t " style="left:98.00px;top:332.00px;font-size:13px;line-height:13px;color:#111;font-weight:bold;letter-spacing:0.588px;transform:scaleX(1.0799);transform-origin:0 0;">BSEA600610 - TCN PROJECT</div>
<div class="t " style="left:1154.39px;top:331.50px;font-size:13px;line-height:13px;color:#000;font-weight:bold;">0</div>
<div class="t " style="left:1210.39px;top:331.50px;font-size:13px;line-height:13px;color:#000;font-weight:bold;">0</div>
<div class="t " style="left:1266.39px;top:331.50px;font-size:13px;line-height:13px;color:#000;font-weight:bold;">0</div>
<div class="t " style="left:1322.39px;top:331.50px;font-size:13px;line-height:13px;color:#000;font-weight:bold;">0</div>
<div class="t " style="left:1378.39px;top:331.50px;font-size:13px;line-height:13px;color:#000;font-weight:bold;">0</div>
<div class="t " style="left:1434.39px;top:331.50px;font-size:13px;line-height:13px;color:#000;font-weight:bold;">0</div>
<div class="t " style="left:1490.39px;top:331.50px;font-size:13px;line-height:13px;color:#000;font-weight:bold;">0</div>
<div class="t " style="left:1587.39px;top:331.50px;font-size:13px;line-height:13px;color:#000;font-weight:bold;">0</div>
<div class="r" style="left:0px;top:351px;width:1649px;height:25px;background:#d5e2f5;"></div>
<div class="r" style="left:0px;top:376px;width:1649px;height:1px;background:#c4c4c4;"></div>
<div class="r" style="left:1354px;top:351px;width:56px;height:25px;background:#ffffa5;"></div>
<div class="r" style="left:1410px;top:351px;width:112px;height:25px;background:#efefef;"></div>
<div class="r" style="left:810px;top:351px;width:1px;height:25px;background:#dcdcdc;"></div>
<div class="r" style="left:901px;top:351px;width:1px;height:25px;background:#dcdcdc;"></div>
<div class="r" style="left:992px;top:351px;width:1px;height:25px;background:#dcdcdc;"></div>
<div class="r" style="left:1061px;top:351px;width:1px;height:25px;background:#dcdcdc;"></div>
<div class="r" style="left:1130px;top:351px;width:1px;height:25px;background:#dcdcdc;"></div>
<div class="r" style="left:1186px;top:351px;width:1px;height:25px;background:#dcdcdc;"></div>
<div class="r" style="left:1242px;top:351px;width:1px;height:25px;background:#dcdcdc;"></div>
<div class="r" style="left:1298px;top:351px;width:1px;height:25px;background:#dcdcdc;"></div>
<div class="r" style="left:1354px;top:351px;width:1px;height:25px;background:#dcdcdc;"></div>
<div class="r" style="left:1410px;top:351px;width:1px;height:25px;background:#dcdcdc;"></div>
<div class="r" style="left:1466px;top:351px;width:1px;height:25px;background:#dcdcdc;"></div>
<div class="r" style="left:1522px;top:351px;width:1px;height:25px;background:#dcdcdc;"></div>
<svg class="r" style="left:17px;top:357px" width="16" height="14" viewBox="0 0 16 14"><rect x="1.5" y="1.5" width="4" height="4" fill="none" stroke="#4f5f95" stroke-width="1.1"/><rect x="10.5" y="1.5" width="4" height="4" fill="none" stroke="#4f5f95" stroke-width="1.1"/><rect x="10.5" y="8.5" width="4.2" height="4.2" fill="none" stroke="#4f5f95" stroke-width="1.1"/><path d="M6 3.5h4M7.5 3.5v7h2.5" stroke="#7080b0" fill="none"/></svg>
<svg class="r" style="left:91px;top:357px" width="12" height="12" viewBox="0 0 12 12"><rect x="0.5" y="0.5" width="11" height="11" rx="2" fill="none" stroke="#8d9dc9"/><path d="M3 6h6" stroke="#5a6a9a" stroke-width="1.6"/></svg>
<div class="t " style="left:114.00px;top:358.00px;font-size:13px;line-height:13px;color:#111;font-weight:bold;letter-spacing:0.672px;transform:scaleX(1.1077);transform-origin:0 0;">BSEA600610 - As built</div>
<div class="r" style="left:0px;top:377px;width:1649px;height:25px;background:#d5e2f5;"></div>
<div class="r" style="left:0px;top:402px;width:1649px;height:1px;background:#c4c4c4;"></div>
<div class="r" style="left:1354px;top:377px;width:56px;height:25px;background:#ffffa5;"></div>
<div class="r" style="left:1410px;top:377px;width:112px;height:25px;background:#efefef;"></div>
<div class="r" style="left:810px;top:377px;width:1px;height:25px;background:#dcdcdc;"></div>
<div class="r" style="left:901px;top:377px;width:1px;height:25px;background:#dcdcdc;"></div>
<div class="r" style="left:992px;top:377px;width:1px;height:25px;background:#dcdcdc;"></div>
<div class="r" style="left:1061px;top:377px;width:1px;height:25px;background:#dcdcdc;"></div>
<div class="r" style="left:1130px;top:377px;width:1px;height:25px;background:#dcdcdc;"></div>
<div class="r" style="left:1186px;top:377px;width:1px;height:25px;background:#dcdcdc;"></div>
<div class="r" style="left:1242px;top:377px;width:1px;height:25px;background:#dcdcdc;"></div>
<div class="r" style="left:1298px;top:377px;width:1px;height:25px;background:#dcdcdc;"></div>
<div class="r" style="left:1354px;top:377px;width:1px;height:25px;background:#dcdcdc;"></div>
<div class="r" style="left:1410px;top:377px;width:1px;height:25px;background:#dcdcdc;"></div>
<div class="r" style="left:1466px;top:377px;width:1px;height:25px;background:#dcdcdc;"></div>
<div class="r" style="left:1522px;top:377px;width:1px;height:25px;background:#dcdcdc;"></div>
<svg class="r" style="left:17px;top:383px" width="16" height="14" viewBox="0 0 16 14"><rect x="1.5" y="1.5" width="4" height="4" fill="none" stroke="#4f5f95" stroke-width="1.1"/><rect x="10.5" y="1.5" width="4" height="4" fill="none" stroke="#4f5f95" stroke-width="1.1"/><rect x="10.5" y="8.5" width="4.2" height="4.2" fill="none" stroke="#4f5f95" stroke-width="1.1"/><path d="M6 3.5h4M7.5 3.5v7h2.5" stroke="#7080b0" fill="none"/></svg>
<svg class="r" style="left:107px;top:383px" width="12" height="12" viewBox="0 0 12 12"><rect x="0.5" y="0.5" width="11" height="11" rx="2" fill="none" stroke="#8d9dc9"/><path d="M3 6h6" stroke="#5a6a9a" stroke-width="1.6"/></svg>
<div class="t " style="left:130.00px;top:384.00px;font-size:13px;line-height:13px;color:#111;font-weight:bold;letter-spacing:0.647px;transform:scaleX(1.1021);transform-origin:0 0;">BSEA600610 - Révision Transfert Moovapps</div>
<div class="r" style="left:0px;top:403px;width:1649px;height:25px;background:#fff;"></div>
<div class="r" style="left:0px;top:428px;width:1649px;height:1px;background:#c4c4c4;"></div>
<div class="r" style="left:1354px;top:403px;width:56px;height:25px;background:#ffffa5;"></div>
<div class="r" style="left:1410px;top:403px;width:112px;height:25px;background:#efefef;"></div>
<div class="r" style="left:810px;top:403px;width:1px;height:25px;background:#dcdcdc;"></div>
<div class="r" style="left:901px;top:403px;width:1px;height:25px;background:#dcdcdc;"></div>
<div class="r" style="left:992px;top:403px;width:1px;height:25px;background:#dcdcdc;"></div>
<div class="r" style="left:1061px;top:403px;width:1px;height:25px;background:#dcdcdc;"></div>
<div class="r" style="left:1130px;top:403px;width:1px;height:25px;background:#dcdcdc;"></div>
<div class="r" style="left:1186px;top:403px;width:1px;height:25px;background:#dcdcdc;"></div>
<div class="r" style="left:1242px;top:403px;width:1px;height:25px;background:#dcdcdc;"></div>
<div class="r" style="left:1298px;top:403px;width:1px;height:25px;background:#dcdcdc;"></div>
<div class="r" style="left:1354px;top:403px;width:1px;height:25px;background:#dcdcdc;"></div>
<div class="r" style="left:1410px;top:403px;width:1px;height:25px;background:#dcdcdc;"></div>
<div class="r" style="left:1466px;top:403px;width:1px;height:25px;background:#dcdcdc;"></div>
<div class="r" style="left:1522px;top:403px;width:1px;height:25px;background:#dcdcdc;"></div>
<svg class="r" style="left:17px;top:409px" width="16" height="14" viewBox="0 0 16 14"><rect x="1.5" y="1.5" width="4" height="4" fill="none" stroke="#4f5f95" stroke-width="1.1"/><rect x="10.5" y="1.5" width="4" height="4" fill="none" stroke="#4f5f95" stroke-width="1.1"/><rect x="10.5" y="8.5" width="4.2" height="4.2" fill="none" stroke="#4f5f95" stroke-width="1.1"/><path d="M6 3.5h4M7.5 3.5v7h2.5" stroke="#7080b0" fill="none"/></svg>
<div class="t " style="left:139.00px;top:410.00px;font-size:13px;line-height:13px;color:#222;letter-spacing:0.436px;transform:scaleX(1.0689);transform-origin:0 0;">BSEA600610 - révision PID &amp; DSD</div>
<div class="t " style="left:739.00px;top:409.69px;font-size:11px;line-height:11px;color:#8383e0;letter-spacing:0.110px;transform:scaleX(1.0195);transform-origin:0 0;">Technicien</div>
<svg class="r" style="left:793px;top:409px" width="18" height="16" viewBox="0 0 18 16"><path d="M2.5 1.5h12a1.5 1.5 0 0 1 1.5 1.5v7M11 11.5H6l-3 3v-3H2.5A1.5 1.5 0 0 1 1 10V3a1.5 1.5 0 0 1 1.5-1.5" stroke="#5a6a9a" stroke-width="1.1" fill="none"/><path d="M14 9v6M11 12h6" stroke="#1a3070" stroke-width="1.4"/></svg>
<div class="t " style="left:816.25px;top:410.00px;font-size:13px;line-height:13px;color:#111;letter-spacing:0.677px;transform:scaleX(1.1033);transform-origin:0 0;">27/12/2022</div>
<div class="t " style="left:907.25px;top:410.00px;font-size:13px;line-height:13px;color:#111;letter-spacing:0.677px;transform:scaleX(1.1033);transform-origin:0 0;">27/12/2022</div>
<div class="t " style="left:1016.11px;top:409.00px;font-size:13px;line-height:13px;color:#555;letter-spacing:0.630px;transform:scaleX(1.0750);transform-origin:0 0;">0,5</div>
<div class="t " style="left:1091.89px;top:409.00px;font-size:13px;line-height:13px;color:#555;">0</div>
<div class="r" style="left:1134px;top:404px;width:46px;height:21px;border:1px solid #7b9ad8;border-radius:4px;background:#fff;"></div>
<div class="t " style="left:1154.66px;top:410.84px;font-size:12px;line-height:12px;color:#222;">0</div>
<div class="r" style="left:1190px;top:404px;width:46px;height:21px;border:1px solid #7b9ad8;border-radius:4px;background:#fff;"></div>
<div class="t " style="left:1210.66px;top:410.84px;font-size:12px;line-height:12px;color:#222;">0</div>
<div class="r" style="left:1246px;top:404px;width:46px;height:21px;border:1px solid #7b9ad8;border-radius:4px;background:#fff;"></div>
<div class="t " style="left:1266.66px;top:410.84px;font-size:12px;line-height:12px;color:#222;">0</div>
<div class="r" style="left:1302px;top:404px;width:46px;height:21px;border:1px solid #7b9ad8;border-radius:4px;background:#fff;"></div>
<div class="t " style="left:1322.66px;top:410.84px;font-size:12px;line-height:12px;color:#222;">0</div>
<div class="r" style="left:1358px;top:404px;width:46px;height:21px;border:1px solid #7b9ad8;border-radius:4px;background:#fff;"></div>
<div class="t " style="left:1378.66px;top:410.84px;font-size:12px;line-height:12px;color:#222;">0</div>
<div class="r" style="left:1414px;top:404px;width:46px;height:21px;border:1px solid #7b9ad8;border-radius:4px;background:#fff;"></div>
<div class="t " style="left:1434.66px;top:410.84px;font-size:12px;line-height:12px;color:#222;">0</div>
<div class="r" style="left:1470px;top:404px;width:46px;height:21px;border:1px solid #7b9ad8;border-radius:4px;background:#fff;"></div>
<div class="t " style="left:1490.66px;top:410.84px;font-size:12px;line-height:12px;color:#222;">0</div>
<div class="r" style="left:1527px;top:404px;width:62px;height:21px;border:1px solid #7b9ad8;border-radius:4px;background:#fff;"></div>
<div class="t " style="left:1548.91px;top:410.84px;font-size:12px;line-height:12px;color:#444;letter-spacing:0.582px;transform:scaleX(1.0750);transform-origin:0 0;">0,5</div>
<div class="t " style="left:1614.61px;top:409.00px;font-size:13px;line-height:13px;color:#555;letter-spacing:0.630px;transform:scaleX(1.0750);transform-origin:0 0;">0,5</div>
<div class="r" style="left:0px;top:429px;width:1649px;height:25px;background:#d5e2f5;"></div>
<div class="r" style="left:0px;top:454px;width:1649px;height:1px;background:#c4c4c4;"></div>
<div class="r" style="left:1354px;top:429px;width:56px;height:25px;background:#ffffa5;"></div>
<div class="r" style="left:1410px;top:429px;width:112px;height:25px;background:#efefef;"></div>
<div class="r" style="left:810px;top:429px;width:1px;height:25px;background:#dcdcdc;"></div>
<div class="r" style="left:901px;top:429px;width:1px;height:25px;background:#dcdcdc;"></div>
<div class="r" style="left:992px;top:429px;width:1px;height:25px;background:#dcdcdc;"></div>
<div class="r" style="left:1061px;top:429px;width:1px;height:25px;background:#dcdcdc;"></div>
<div class="r" style="left:1130px;top:429px;width:1px;height:25px;background:#dcdcdc;"></div>
<div class="r" style="left:1186px;top:429px;width:1px;height:25px;background:#dcdcdc;"></div>
<div class="r" style="left:1242px;top:429px;width:1px;height:25px;background:#dcdcdc;"></div>
<div class="r" style="left:1298px;top:429px;width:1px;height:25px;background:#dcdcdc;"></div>
<div class="r" style="left:1354px;top:429px;width:1px;height:25px;background:#dcdcdc;"></div>
<div class="r" style="left:1410px;top:429px;width:1px;height:25px;background:#dcdcdc;"></div>
<div class="r" style="left:1466px;top:429px;width:1px;height:25px;background:#dcdcdc;"></div>
<div class="r" style="left:1522px;top:429px;width:1px;height:25px;background:#dcdcdc;"></div>
<svg class="r" style="left:17px;top:434px" width="16" height="16" viewBox="0 0 16 16"><path d="M8.00,0.40 L9.48,0.55 L10.22,2.64 L11.22,3.18 L13.37,2.63 L14.32,3.78 L13.36,5.78 L13.69,6.87 L15.60,8.00 L15.45,9.48 L13.36,10.22 L12.82,11.22 L13.37,13.37 L12.22,14.32 L10.22,13.36 L9.13,13.69 L8.00,15.60 L6.52,15.45 L5.78,13.36 L4.78,12.82 L2.63,13.37 L1.68,12.22 L2.64,10.22 L2.31,9.13 L0.40,8.00 L0.55,6.52 L2.64,5.78 L3.18,4.78 L2.63,2.63 L3.78,1.68 L5.78,2.64 L6.87,2.31Z" fill="none" stroke="#5a6a9a" stroke-width="1.1" stroke-linejoin="round"/><circle cx="8" cy="8" r="3" fill="none" stroke="#5a6a9a" stroke-width="1.1"/></svg>
<svg class="r" style="left:75px;top:435px" width="12" height="12" viewBox="0 0 12 12"><rect x="0.5" y="0.5" width="11" height="11" rx="2" fill="none" stroke="#8d9dc9"/><path d="M3 6h6" stroke="#5a6a9a" stroke-width="1.6"/><path d="M6 3v6" stroke="#5a6a9a" stroke-width="1.6"/></svg>
<svg class="r" style="left:95px;top:434px" width="12" height="16" viewBox="0 0 12 16"><path d="M3 7V4.5a3 3 0 0 1 6 0V7" stroke="#5a6a9a" stroke-width="1.2" fill="none"/><rect x="0.5" y="7" width="11" height="8.5" rx="1.5" fill="none" stroke="#5a6a9a" stroke-width="1.1"/><circle cx="6" cy="10.5" r="1.2" fill="#2a3a7a"/><path d="M6 11v2" stroke="#2a3a7a" stroke-width="1.1"/></svg>
<svg class="r" style="left:111px;top:434px" width="12" height="16" viewBox="0 0 12 16"><path d="M3 7V4.5a3 3 0 0 1 6 0V7" stroke="#5a6a9a" stroke-width="1.2" fill="none"/><rect x="0.5" y="7" width="11" height="8.5" rx="1.5" fill="none" stroke="#5a6a9a" stroke-width="1.1"/><circle cx="6" cy="10.5" r="1.2" fill="#2a3a7a"/><path d="M6 11v2" stroke="#2a3a7a" stroke-width="1.1"/></svg>
<div class="t " style="left:130.00px;top:436.00px;font-size:13px;line-height:13px;color:#111;font-weight:bold;letter-spacing:0.660px;transform:scaleX(1.1001);transform-origin:0 0;">BSEAxxxxxx - Project Name</div>
<div class="t " style="left:1154.39px;top:435.50px;font-size:13px;line-height:13px;color:#000;font-weight:bold;">0</div>
<div class="t " style="left:1210.39px;top:435.50px;font-size:13px;line-height:13px;color:#000;font-weight:bold;">0</div>
<div class="t " style="left:1266.39px;top:435.50px;font-size:13px;line-height:13px;color:#000;font-weight:bold;">0</div>
<div class="t " style="left:1322.39px;top:435.50px;font-size:13px;line-height:13px;color:#000;font-weight:bold;">0</div>
<div class="t " style="left:1378.39px;top:435.50px;font-size:13px;line-height:13px;color:#000;font-weight:bold;">0</div>
<div class="t " style="left:1434.39px;top:435.50px;font-size:13px;line-height:13px;color:#000;font-weight:bold;">0</div>
<div class="t " style="left:1490.39px;top:435.50px;font-size:13px;line-height:13px;color:#000;font-weight:bold;">0</div>
<div class="t " style="left:1587.39px;top:435.50px;font-size:13px;line-height:13px;color:#000;font-weight:bold;">0</div>
<div class="r" style="left:0px;top:455px;width:1649px;height:25px;background:#d5e2f5;"></div>
<div class="r" style="left:0px;top:480px;width:1649px;height:1px;background:#c4c4c4;"></div>
<div class="r" style="left:1354px;top:455px;width:56px;height:25px;background:#ffffa5;"></div>
<div class="r" style="left:1410px;top:455px;width:112px;height:25px;background:#efefef;"></div>
<div class="r" style="left:810px;top:455px;width:1px;height:25px;background:#dcdcdc;"></div>
<div class="r" style="left:901px;top:455px;width:1px;height:25px;background:#dcdcdc;"></div>
<div class="r" style="left:992px;top:455px;width:1px;height:25px;background:#dcdcdc;"></div>
<div class="r" style="left:1061px;top:455px;width:1px;height:25px;background:#dcdcdc;"></div>
<div class="r" style="left:1130px;top:455px;width:1px;height:25px;background:#dcdcdc;"></div>
<div class="r" style="left:1186px;top:455px;width:1px;height:25px;background:#dcdcdc;"></div>
<div class="r" style="left:1242px;top:455px;width:1px;height:25px;background:#dcdcdc;"></div>
<div class="r" style="left:1298px;top:455px;width:1px;height:25px;background:#dcdcdc;"></div>
<div class="r" style="left:1354px;top:455px;width:1px;height:25px;background:#dcdcdc;"></div>
<div class="r" style="left:1410px;top:455px;width:1px;height:25px;background:#dcdcdc;"></div>
<div class="r" style="left:1466px;top:455px;width:1px;height:25px;background:#dcdcdc;"></div>
<div class="r" style="left:1522px;top:455px;width:1px;height:25px;background:#dcdcdc;"></div>
<svg class="r" style="left:17px;top:460px" width="16" height="16" viewBox="0 0 16 16"><path d="M8.00,0.40 L9.48,0.55 L10.22,2.64 L11.22,3.18 L13.37,2.63 L14.32,3.78 L13.36,5.78 L13.69,6.87 L15.60,8.00 L15.45,9.48 L13.36,10.22 L12.82,11.22 L13.37,13.37 L12.22,14.32 L10.22,13.36 L9.13,13.69 L8.00,15.60 L6.52,15.45 L5.78,13.36 L4.78,12.82 L2.63,13.37 L1.68,12.22 L2.64,10.22 L2.31,9.13 L0.40,8.00 L0.55,6.52 L2.64,5.78 L3.18,4.78 L2.63,2.63 L3.78,1.68 L5.78,2.64 L6.87,2.31Z" fill="none" stroke="#5a6a9a" stroke-width="1.1" stroke-linejoin="round"/><circle cx="8" cy="8" r="3" fill="none" stroke="#5a6a9a" stroke-width="1.1"/></svg>
<svg class="r" style="left:75px;top:461px" width="12" height="12" viewBox="0 0 12 12"><rect x="0.5" y="0.5" width="11" height="11" rx="2" fill="none" stroke="#8d9dc9"/><path d="M3 6h6" stroke="#5a6a9a" stroke-width="1.6"/></svg>
<svg class="r" style="left:95px;top:460px" width="12" height="16" viewBox="0 0 12 16"><path d="M3 7V4.5a3 3 0 0 1 6 0V7" stroke="#5a6a9a" stroke-width="1.2" fill="none"/><rect x="0.5" y="7" width="11" height="8.5" rx="1.5" fill="none" stroke="#5a6a9a" stroke-width="1.1"/><circle cx="6" cy="10.5" r="1.2" fill="#2a3a7a"/><path d="M6 11v2" stroke="#2a3a7a" stroke-width="1.1"/></svg>
<div class="t " style="left:114.00px;top:462.00px;font-size:13px;line-height:13px;color:#111;font-weight:bold;letter-spacing:0.591px;transform:scaleX(1.0794);transform-origin:0 0;">BSEA600616 - ARCANGEL SAN GABRIEL</div>
<div class="t " style="left:1154.39px;top:461.50px;font-size:13px;line-height:13px;color:#000;font-weight:bold;">0</div>
<div class="t " style="left:1210.39px;top:461.50px;font-size:13px;line-height:13px;color:#000;font-weight:bold;">0</div>
<div class="t " style="left:1266.39px;top:461.50px;font-size:13px;line-height:13px;color:#000;font-weight:bold;">0</div>
<div class="t " style="left:1322.39px;top:461.50px;font-size:13px;line-height:13px;color:#000;font-weight:bold;">0</div>
<div class="t " style="left:1378.39px;top:461.50px;font-size:13px;line-height:13px;color:#000;font-weight:bold;">0</div>
<div class="t " style="left:1434.39px;top:461.50px;font-size:13px;line-height:13px;color:#000;font-weight:bold;">0</div>
<div class="t " style="left:1490.39px;top:461.50px;font-size:13px;line-height:13px;color:#000;font-weight:bold;">0</div>
<div class="t " style="left:1587.39px;top:461.50px;font-size:13px;line-height:13px;color:#000;font-weight:bold;">0</div>
<div class="r" style="left:0px;top:481px;width:1649px;height:25px;background:#d5e2f5;"></div>
<div class="r" style="left:0px;top:506px;width:1649px;height:1px;background:#c4c4c4;"></div>
<div class="r" style="left:1354px;top:481px;width:56px;height:25px;background:#ffffa5;"></div>
<div class="r" style="left:1410px;top:481px;width:112px;height:25px;background:#efefef;"></div>
<div class="r" style="left:810px;top:481px;width:1px;height:25px;background:#dcdcdc;"></div>
<div class="r" style="left:901px;top:481px;width:1px;height:25px;background:#dcdcdc;"></div>
<div class="r" style="left:992px;top:481px;width:1px;height:25px;background:#dcdcdc;"></div>
<div class="r" style="left:1061px;top:481px;width:1px;height:25px;background:#dcdcdc;"></div>
<div class="r" style="left:1130px;top:481px;width:1px;height:25px;background:#dcdcdc;"></div>
<div class="r" style="left:1186px;top:481px;width:1px;height:25px;background:#dcdcdc;"></div>
<div class="r" style="left:1242px;top:481px;width:1px;height:25px;background:#dcdcdc;"></div>
<div class="r" style="left:1298px;top:481px;width:1px;height:25px;background:#dcdcdc;"></div>
<div class="r" style="left:1354px;top:481px;width:1px;height:25px;background:#dcdcdc;"></div>
<div class="r" style="left:1410px;top:481px;width:1px;height:25px;background:#dcdcdc;"></div>
<div class="r" style="left:1466px;top:481px;width:1px;height:25px;background:#dcdcdc;"></div>
<div class="r" style="left:1522px;top:481px;width:1px;height:25px;background:#dcdcdc;"></div>
<svg class="r" style="left:17px;top:486px" width="16" height="16" viewBox="0 0 16 16"><path d="M8.00,0.40 L9.48,0.55 L10.22,2.64 L11.22,3.18 L13.37,2.63 L14.32,3.78 L13.36,5.78 L13.69,6.87 L15.60,8.00 L15.45,9.48 L13.36,10.22 L12.82,11.22 L13.37,13.37 L12.22,14.32 L10.22,13.36 L9.13,13.69 L8.00,15.60 L6.52,15.45 L5.78,13.36 L4.78,12.82 L2.63,13.37 L1.68,12.22 L2.64,10.22 L2.31,9.13 L0.40,8.00 L0.55,6.52 L2.64,5.78 L3.18,4.78 L2.63,2.63 L3.78,1.68 L5.78,2.64 L6.87,2.31Z" fill="none" stroke="#5a6a9a" stroke-width="1.1" stroke-linejoin="round"/><circle cx="8" cy="8" r="3" fill="none" stroke="#5a6a9a" stroke-width="1.1"/></svg>
<svg class="r" style="left:75px;top:487px" width="12" height="12" viewBox="0 0 12 12"><rect x="0.5" y="0.5" width="11" height="11" rx="2" fill="none" stroke="#8d9dc9"/><path d="M3 6h6" stroke="#5a6a9a" stroke-width="1.6"/></svg>
<svg class="r" style="left:95px;top:486px" width="12" height="16" viewBox="0 0 12 16"><path d="M3 7V4.5a3 3 0 0 1 6 0V7" stroke="#5a6a9a" stroke-width="1.2" fill="none"/><rect x="0.5" y="7" width="11" height="8.5" rx="1.5" fill="none" stroke="#5a6a9a" stroke-width="1.1"/><circle cx="6" cy="10.5" r="1.2" fill="#2a3a7a"/><path d="M6 11v2" stroke="#2a3a7a" stroke-width="1.1"/></svg>
<div class="t " style="left:114.00px;top:488.00px;font-size:13px;line-height:13px;color:#111;font-weight:bold;letter-spacing:0.574px;transform:scaleX(1.0765);transform-origin:0 0;">BSEA600617 - ARCANGEL SAN RAFAEL</div>
<div class="t " style="left:1154.39px;top:487.50px;font-size:13px;line-height:13px;color:#000;font-weight:bold;">0</div>
<div class="t " style="left:1210.39px;top:487.50px;font-size:13px;line-height:13px;color:#000;font-weight:bold;">0</div>
<div class="t " style="left:1266.39px;top:487.50px;font-size:13px;line-height:13px;color:#000;font-weight:bold;">0</div>
<div class="t " style="left:1322.39px;top:487.50px;font-size:13px;line-height:13px;color:#000;font-weight:bold;">0</div>
<div class="t " style="left:1378.39px;top:487.50px;font-size:13px;line-height:13px;color:#000;font-weight:bold;">0</div>
<div class="t " style="left:1434.39px;top:487.50px;font-size:13px;line-height:13px;color:#000;font-weight:bold;">0</div>
<div class="t " style="left:1490.39px;top:487.50px;font-size:13px;line-height:13px;color:#000;font-weight:bold;">0</div>
<div class="t " style="left:1587.39px;top:487.50px;font-size:13px;line-height:13px;color:#000;font-weight:bold;">0</div>
<div class="r" style="left:0px;top:507px;width:1649px;height:25px;background:#d5e2f5;"></div>
<div class="r" style="left:0px;top:532px;width:1649px;height:1px;background:#c4c4c4;"></div>
<div class="r" style="left:1354px;top:507px;width:56px;height:25px;background:#ffffa5;"></div>
<div class="r" style="left:1410px;top:507px;width:112px;height:25px;background:#efefef;"></div>
<div class="r" style="left:810px;top:507px;width:1px;height:25px;background:#dcdcdc;"></div>
<div class="r" style="left:901px;top:507px;width:1px;height:25px;background:#dcdcdc;"></div>
<div class="r" style="left:992px;top:507px;width:1px;height:25px;background:#dcdcdc;"></div>
<div class="r" style="left:1061px;top:507px;width:1px;height:25px;background:#dcdcdc;"></div>
<div class="r" style="left:1130px;top:507px;width:1px;height:25px;background:#dcdcdc;"></div>
<div class="r" style="left:1186px;top:507px;width:1px;height:25px;background:#dcdcdc;"></div>
<div class="r" style="left:1242px;top:507px;width:1px;height:25px;background:#dcdcdc;"></div>
<div class="r" style="left:1298px;top:507px;width:1px;height:25px;background:#dcdcdc;"></div>
<div class="r" style="left:1354px;top:507px;width:1px;height:25px;background:#dcdcdc;"></div>
<div class="r" style="left:1410px;top:507px;width:1px;height:25px;background:#dcdcdc;"></div>
<div class="r" style="left:1466px;top:507px;width:1px;height:25px;background:#dcdcdc;"></div>
<div class="r" style="left:1522px;top:507px;width:1px;height:25px;background:#dcdcdc;"></div>
<svg class="r" style="left:17px;top:512px" width="16" height="16" viewBox="0 0 16 16"><path d="M8.00,0.40 L9.48,0.55 L10.22,2.64 L11.22,3.18 L13.37,2.63 L14.32,3.78 L13.36,5.78 L13.69,6.87 L15.60,8.00 L15.45,9.48 L13.36,10.22 L12.82,11.22 L13.37,13.37 L12.22,14.32 L10.22,13.36 L9.13,13.69 L8.00,15.60 L6.52,15.45 L5.78,13.36 L4.78,12.82 L2.63,13.37 L1.68,12.22 L2.64,10.22 L2.31,9.13 L0.40,8.00 L0.55,6.52 L2.64,5.78 L3.18,4.78 L2.63,2.63 L3.78,1.68 L5.78,2.64 L6.87,2.31Z" fill="none" stroke="#5a6a9a" stroke-width="1.1" stroke-linejoin="round"/><circle cx="8" cy="8" r="3" fill="none" stroke="#5a6a9a" stroke-width="1.1"/></svg>
<svg class="r" style="left:59px;top:513px" width="12" height="12" viewBox="0 0 12 12"><rect x="0.5" y="0.5" width="11" height="11" rx="2" fill="none" stroke="#8d9dc9"/><path d="M3 6h6" stroke="#5a6a9a" stroke-width="1.6"/></svg>
<div class="t " style="left:82.00px;top:514.00px;font-size:13px;line-height:13px;color:#111;font-weight:bold;letter-spacing:0.761px;transform:scaleX(1.1131);transform-origin:0 0;">667836 - TCG</div>
<div class="t " style="left:1154.39px;top:513.50px;font-size:13px;line-height:13px;color:#000;font-weight:bold;">0</div>
<div class="t " style="left:1210.39px;top:513.50px;font-size:13px;line-height:13px;color:#000;font-weight:bold;">0</div>
<div class="t " style="left:1266.39px;top:513.50px;font-size:13px;line-height:13px;color:#000;font-weight:bold;">0</div>
<div class="t " style="left:1322.39px;top:513.50px;font-size:13px;line-height:13px;color:#000;font-weight:bold;">0</div>
<div class="t " style="left:1378.39px;top:513.50px;font-size:13px;line-height:13px;color:#000;font-weight:bold;">0</div>
<div class="t " style="left:1434.39px;top:513.50px;font-size:13px;line-height:13px;color:#000;font-weight:bold;">0</div>
<div class="t " style="left:1490.39px;top:513.50px;font-size:13px;line-height:13px;color:#000;font-weight:bold;">0</div>
<div class="t " style="left:1587.39px;top:513.50px;font-size:13px;line-height:13px;color:#000;font-weight:bold;">0</div>
<div class="r" style="left:0px;top:533px;width:1649px;height:25px;background:#fff;"></div>
<div class="r" style="left:0px;top:558px;width:1649px;height:1px;background:#c4c4c4;"></div>
<div class="r" style="left:1354px;top:533px;width:56px;height:25px;background:#ffffa5;"></div>
<div class="r" style="left:1410px;top:533px;width:112px;height:25px;background:#efefef;"></div>
<div class="r" style="left:810px;top:533px;width:1px;height:25px;background:#dcdcdc;"></div>
<div class="r" style="left:901px;top:533px;width:1px;height:25px;background:#dcdcdc;"></div>
<div class="r" style="left:992px;top:533px;width:1px;height:25px;background:#dcdcdc;"></div>
<div class="r" style="left:1061px;top:533px;width:1px;height:25px;background:#dcdcdc;"></div>
<div class="r" style="left:1130px;top:533px;width:1px;height:25px;background:#dcdcdc;"></div>
<div class="r" style="left:1186px;top:533px;width:1px;height:25px;background:#dcdcdc;"></div>
<div class="r" style="left:1242px;top:533px;width:1px;height:25px;background:#dcdcdc;"></div>
<div class="r" style="left:1298px;top:533px;width:1px;height:25px;background:#dcdcdc;"></div>
<div class="r" style="left:1354px;top:533px;width:1px;height:25px;background:#dcdcdc;"></div>
<div class="r" style="left:1410px;top:533px;width:1px;height:25px;background:#dcdcdc;"></div>
<div class="r" style="left:1466px;top:533px;width:1px;height:25px;background:#dcdcdc;"></div>
<div class="r" style="left:1522px;top:533px;width:1px;height:25px;background:#dcdcdc;"></div>
<svg class="r" style="left:17px;top:539px" width="16" height="14" viewBox="0 0 16 14"><rect x="1.5" y="1.5" width="4" height="4" fill="none" stroke="#4f5f95" stroke-width="1.1"/><rect x="10.5" y="1.5" width="4" height="4" fill="none" stroke="#4f5f95" stroke-width="1.1"/><rect x="10.5" y="8.5" width="4.2" height="4.2" fill="none" stroke="#4f5f95" stroke-width="1.1"/><path d="M6 3.5h4M7.5 3.5v7h2.5" stroke="#7080b0" fill="none"/></svg>
<div class="t " style="left:91.00px;top:540.00px;font-size:13px;line-height:13px;color:#222;letter-spacing:0.417px;transform:scaleX(1.0637);transform-origin:0 0;">Réunions équipe</div>
<div class="t " style="left:739.00px;top:539.69px;font-size:11px;line-height:11px;color:#8383e0;letter-spacing:0.110px;transform:scaleX(1.0195);transform-origin:0 0;">Technicien</div>
<svg class="r" style="left:793px;top:539px" width="18" height="16" viewBox="0 0 18 16"><path d="M2.5 1.5h12a1.5 1.5 0 0 1 1.5 1.5v7M11 11.5H6l-3 3v-3H2.5A1.5 1.5 0 0 1 1 10V3a1.5 1.5 0 0 1 1.5-1.5" stroke="#5a6a9a" stroke-width="1.1" fill="none"/><path d="M14 9v6M11 12h6" stroke="#1a3070" stroke-width="1.4"/></svg>
<div class="t " style="left:816.25px;top:540.00px;font-size:13px;line-height:13px;color:#111;letter-spacing:0.677px;transform:scaleX(1.1033);transform-origin:0 0;">20/09/2021</div>
<div class="t " style="left:907.25px;top:540.00px;font-size:13px;line-height:13px;color:#111;letter-spacing:0.677px;transform:scaleX(1.1033);transform-origin:0 0;">19/04/2022</div>
<div class="t " style="left:1022.89px;top:539.00px;font-size:13px;line-height:13px;color:#555;">0</div>
<div class="t " style="left:1091.89px;top:539.00px;font-size:13px;line-height:13px;color:#555;">1</div>
<div class="t " style="left:1154.66px;top:540.84px;font-size:12px;line-height:12px;color:#666;">0</div>
<div class="t " style="left:1210.66px;top:540.84px;font-size:12px;line-height:12px;color:#666;">0</div>
<div class="t " style="left:1266.66px;top:540.84px;font-size:12px;line-height:12px;color:#666;">0</div>
<div class="t " style="left:1322.66px;top:540.84px;font-size:12px;line-height:12px;color:#666;">0</div>
<div class="t " style="left:1378.66px;top:540.84px;font-size:12px;line-height:12px;color:#666;">0</div>
<div class="t " style="left:1434.66px;top:540.84px;font-size:12px;line-height:12px;color:#666;">0</div>
<div class="t " style="left:1490.66px;top:540.84px;font-size:12px;line-height:12px;color:#666;">0</div>
<div class="r" style="left:1527px;top:534px;width:62px;height:21px;border:1px solid #7b9ad8;border-radius:4px;background:#fff;"></div>
<div class="t " style="left:1555.16px;top:540.84px;font-size:12px;line-height:12px;color:#444;">0</div>
<div class="t " style="left:1621.39px;top:539.00px;font-size:13px;line-height:13px;color:#555;">1</div>
<div class="r" style="left:0px;top:559px;width:1649px;height:25px;background:#d5e2f5;"></div>
<div class="r" style="left:0px;top:584px;width:1649px;height:1px;background:#c4c4c4;"></div>
<div class="r" style="left:1354px;top:559px;width:56px;height:25px;background:#ffffa5;"></div>
<div class="r" style="left:1410px;top:559px;width:112px;height:25px;background:#efefef;"></div>
<div class="r" style="left:810px;top:559px;width:1px;height:25px;background:#dcdcdc;"></div>
<div class="r" style="left:901px;top:559px;width:1px;height:25px;background:#dcdcdc;"></div>
<div class="r" style="left:992px;top:559px;width:1px;height:25px;background:#dcdcdc;"></div>
<div class="r" style="left:1061px;top:559px;width:1px;height:25px;background:#dcdcdc;"></div>
<div class="r" style="left:1130px;top:559px;width:1px;height:25px;background:#dcdcdc;"></div>
<div class="r" style="left:1186px;top:559px;width:1px;height:25px;background:#dcdcdc;"></div>
<div class="r" style="left:1242px;top:559px;width:1px;height:25px;background:#dcdcdc;"></div>
<div class="r" style="left:1298px;top:559px;width:1px;height:25px;background:#dcdcdc;"></div>
<div class="r" style="left:1354px;top:559px;width:1px;height:25px;background:#dcdcdc;"></div>
<div class="r" style="left:1410px;top:559px;width:1px;height:25px;background:#dcdcdc;"></div>
<div class="r" style="left:1466px;top:559px;width:1px;height:25px;background:#dcdcdc;"></div>
<div class="r" style="left:1522px;top:559px;width:1px;height:25px;background:#dcdcdc;"></div>
<svg class="r" style="left:17px;top:564px" width="16" height="16" viewBox="0 0 16 16"><path d="M8.00,0.40 L9.48,0.55 L10.22,2.64 L11.22,3.18 L13.37,2.63 L14.32,3.78 L13.36,5.78 L13.69,6.87 L15.60,8.00 L15.45,9.48 L13.36,10.22 L12.82,11.22 L13.37,13.37 L12.22,14.32 L10.22,13.36 L9.13,13.69 L8.00,15.60 L6.52,15.45 L5.78,13.36 L4.78,12.82 L2.63,13.37 L1.68,12.22 L2.64,10.22 L2.31,9.13 L0.40,8.00 L0.55,6.52 L2.64,5.78 L3.18,4.78 L2.63,2.63 L3.78,1.68 L5.78,2.64 L6.87,2.31Z" fill="none" stroke="#5a6a9a" stroke-width="1.1" stroke-linejoin="round"/><circle cx="8" cy="8" r="3" fill="none" stroke="#5a6a9a" stroke-width="1.1"/></svg>
<svg class="r" style="left:75px;top:565px" width="12" height="12" viewBox="0 0 12 12"><rect x="0.5" y="0.5" width="11" height="11" rx="2" fill="none" stroke="#8d9dc9"/><path d="M3 6h6" stroke="#5a6a9a" stroke-width="1.6"/></svg>
<div class="t " style="left:98.00px;top:566.00px;font-size:13px;line-height:13px;color:#111;font-weight:bold;letter-spacing:0.649px;transform:scaleX(1.1015);transform-origin:0 0;">CLIN 0002 - Compact BWTS Developmental Technical Data Package - Compact BWTS</div>
<div class="t " style="left:1154.39px;top:565.50px;font-size:13px;line-height:13px;color:#000;font-weight:bold;">0</div>
<div class="t " style="left:1210.39px;top:565.50px;font-size:13px;line-height:13px;color:#000;font-weight:bold;">0</div>
<div class="t " style="left:1266.39px;top:565.50px;font-size:13px;line-height:13px;color:#000;font-weight:bold;">0</div>
<div class="t " style="left:1322.39px;top:565.50px;font-size:13px;line-height:13px;color:#000;font-weight:bold;">0</div>
<div class="t " style="left:1378.39px;top:565.50px;font-size:13px;line-height:13px;color:#000;font-weight:bold;">0</div>
<div class="t " style="left:1434.39px;top:565.50px;font-size:13px;line-height:13px;color:#000;font-weight:bold;">0</div>
<div class="t " style="left:1490.39px;top:565.50px;font-size:13px;line-height:13px;color:#000;font-weight:bold;">0</div>
<div class="t " style="left:1587.39px;top:565.50px;font-size:13px;line-height:13px;color:#000;font-weight:bold;">0</div>
<div class="r" style="left:0px;top:585px;width:1649px;height:25px;background:#d5e2f5;"></div>
<div class="r" style="left:0px;top:610px;width:1649px;height:1px;background:#c4c4c4;"></div>
<div class="r" style="left:1354px;top:585px;width:56px;height:25px;background:#ffffa5;"></div>
<div class="r" style="left:1410px;top:585px;width:112px;height:25px;background:#efefef;"></div>
<div class="r" style="left:810px;top:585px;width:1px;height:25px;background:#dcdcdc;"></div>
<div class="r" style="left:901px;top:585px;width:1px;height:25px;background:#dcdcdc;"></div>
<div class="r" style="left:992px;top:585px;width:1px;height:25px;background:#dcdcdc;"></div>
<div class="r" style="left:1061px;top:585px;width:1px;height:25px;background:#dcdcdc;"></div>
<div class="r" style="left:1130px;top:585px;width:1px;height:25px;background:#dcdcdc;"></div>
<div class="r" style="left:1186px;top:585px;width:1px;height:25px;background:#dcdcdc;"></div>
<div class="r" style="left:1242px;top:585px;width:1px;height:25px;background:#dcdcdc;"></div>
<div class="r" style="left:1298px;top:585px;width:1px;height:25px;background:#dcdcdc;"></div>
<div class="r" style="left:1354px;top:585px;width:1px;height:25px;background:#dcdcdc;"></div>
<div class="r" style="left:1410px;top:585px;width:1px;height:25px;background:#dcdcdc;"></div>
<div class="r" style="left:1466px;top:585px;width:1px;height:25px;background:#dcdcdc;"></div>
<div class="r" style="left:1522px;top:585px;width:1px;height:25px;background:#dcdcdc;"></div>
<svg class="r" style="left:17px;top:591px" width="16" height="14" viewBox="0 0 16 14"><rect x="1.5" y="1.5" width="4" height="4" fill="none" stroke="#4f5f95" stroke-width="1.1"/><rect x="10.5" y="1.5" width="4" height="4" fill="none" stroke="#4f5f95" stroke-width="1.1"/><rect x="10.5" y="8.5" width="4.2" height="4.2" fill="none" stroke="#4f5f95" stroke-width="1.1"/><path d="M6 3.5h4M7.5 3.5v7h2.5" stroke="#7080b0" fill="none"/></svg>
<svg class="r" style="left:91px;top:591px" width="12" height="12" viewBox="0 0 12 12"><rect x="0.5" y="0.5" width="11" height="11" rx="2" fill="none" stroke="#8d9dc9"/><path d="M3 6h6" stroke="#5a6a9a" stroke-width="1.6"/></svg>
<div class="t " style="left:114.00px;top:592.00px;font-size:13px;line-height:13px;color:#111;font-weight:bold;letter-spacing:0.667px;transform:scaleX(1.1001);transform-origin:0 0;">General Documentation</div>
<div class="t " style="left:739.00px;top:591.69px;font-size:11px;line-height:11px;color:#8383e0;letter-spacing:0.110px;transform:scaleX(1.0195);transform-origin:0 0;">Technicien</div>
<svg class="r" style="left:793px;top:591px" width="18" height="16" viewBox="0 0 18 16"><path d="M2.5 1.5h12a1.5 1.5 0 0 1 1.5 1.5v7M11 11.5H6l-3 3v-3H2.5A1.5 1.5 0 0 1 1 10V3a1.5 1.5 0 0 1 1.5-1.5" stroke="#5a6a9a" stroke-width="1.1" fill="none"/><path d="M14 9v6M11 12h6" stroke="#1a3070" stroke-width="1.4"/></svg>
<div class="t " style="left:816.25px;top:592.00px;font-size:13px;line-height:13px;color:#111;letter-spacing:0.677px;transform:scaleX(1.1033);transform-origin:0 0;">08/10/2021</div>
<div class="t " style="left:907.25px;top:592.00px;font-size:13px;line-height:13px;color:#111;letter-spacing:0.677px;transform:scaleX(1.1033);transform-origin:0 0;">02/01/2023</div>
<div class="t " style="left:1022.89px;top:591.00px;font-size:13px;line-height:13px;color:#555;">0</div>
<div class="t " style="left:1085.11px;top:591.00px;font-size:13px;line-height:13px;color:#555;letter-spacing:0.630px;transform:scaleX(1.0750);transform-origin:0 0;">0,5</div>
<div class="t " style="left:1154.66px;top:592.84px;font-size:12px;line-height:12px;color:#666;">0</div>
<div class="t " style="left:1210.66px;top:592.84px;font-size:12px;line-height:12px;color:#666;">0</div>
<div class="t " style="left:1266.66px;top:592.84px;font-size:12px;line-height:12px;color:#666;">0</div>
<div class="t " style="left:1322.66px;top:592.84px;font-size:12px;line-height:12px;color:#666;">0</div>
<div class="t " style="left:1378.66px;top:592.84px;font-size:12px;line-height:12px;color:#666;">0</div>
<div class="t " style="left:1434.66px;top:592.84px;font-size:12px;line-height:12px;color:#666;">0</div>
<div class="t " style="left:1490.66px;top:592.84px;font-size:12px;line-height:12px;color:#666;">0</div>
<div class="r" style="left:1527px;top:586px;width:62px;height:21px;border:1px solid #7b9ad8;border-radius:4px;background:#fff;"></div>
<div class="t " style="left:1555.16px;top:592.84px;font-size:12px;line-height:12px;color:#444;">0</div>
<div class="t " style="left:1614.61px;top:591.00px;font-size:13px;line-height:13px;color:#555;letter-spacing:0.630px;transform:scaleX(1.0750);transform-origin:0 0;">0,5</div>
<div class="r" style="left:0px;top:611px;width:1649px;height:25px;background:#d5e2f5;"></div>
<div class="r" style="left:0px;top:636px;width:1649px;height:1px;background:#c4c4c4;"></div>
<div class="r" style="left:1354px;top:611px;width:56px;height:25px;background:#ffffa5;"></div>
<div class="r" style="left:1410px;top:611px;width:112px;height:25px;background:#efefef;"></div>
<div class="r" style="left:810px;top:611px;width:1px;height:25px;background:#dcdcdc;"></div>
<div class="r" style="left:901px;top:611px;width:1px;height:25px;background:#dcdcdc;"></div>
<div class="r" style="left:992px;top:611px;width:1px;height:25px;background:#dcdcdc;"></div>
<div class="r" style="left:1061px;top:611px;width:1px;height:25px;background:#dcdcdc;"></div>
<div class="r" style="left:1130px;top:611px;width:1px;height:25px;background:#dcdcdc;"></div>
<div class="r" style="left:1186px;top:611px;width:1px;height:25px;background:#dcdcdc;"></div>
<div class="r" style="left:1242px;top:611px;width:1px;height:25px;background:#dcdcdc;"></div>
<div class="r" style="left:1298px;top:611px;width:1px;height:25px;background:#dcdcdc;"></div>
<div class="r" style="left:1354px;top:611px;width:1px;height:25px;background:#dcdcdc;"></div>
<div class="r" style="left:1410px;top:611px;width:1px;height:25px;background:#dcdcdc;"></div>
<div class="r" style="left:1466px;top:611px;width:1px;height:25px;background:#dcdcdc;"></div>
<div class="r" style="left:1522px;top:611px;width:1px;height:25px;background:#dcdcdc;"></div>
<svg class="r" style="left:17px;top:616px" width="16" height="16" viewBox="0 0 16 16"><path d="M8.00,0.40 L9.48,0.55 L10.22,2.64 L11.22,3.18 L13.37,2.63 L14.32,3.78 L13.36,5.78 L13.69,6.87 L15.60,8.00 L15.45,9.48 L13.36,10.22 L12.82,11.22 L13.37,13.37 L12.22,14.32 L10.22,13.36 L9.13,13.69 L8.00,15.60 L6.52,15.45 L5.78,13.36 L4.78,12.82 L2.63,13.37 L1.68,12.22 L2.64,10.22 L2.31,9.13 L0.40,8.00 L0.55,6.52 L2.64,5.78 L3.18,4.78 L2.63,2.63 L3.78,1.68 L5.78,2.64 L6.87,2.31Z" fill="none" stroke="#5a6a9a" stroke-width="1.1" stroke-linejoin="round"/><circle cx="8" cy="8" r="3" fill="none" stroke="#5a6a9a" stroke-width="1.1"/></svg>
<svg class="r" style="left:75px;top:617px" width="12" height="12" viewBox="0 0 12 12"><rect x="0.5" y="0.5" width="11" height="11" rx="2" fill="none" stroke="#8d9dc9"/><path d="M3 6h6" stroke="#5a6a9a" stroke-width="1.6"/></svg>
<div class="t " style="left:98.00px;top:618.00px;font-size:13px;line-height:13px;color:#111;font-weight:bold;letter-spacing:0.707px;transform:scaleX(1.1108);transform-origin:0 0;">CLIN 0003 - Compact BWTS Manufacturing B03-0340</div>
<div class="t " style="left:1154.39px;top:617.50px;font-size:13px;line-height:13px;color:#000;font-weight:bold;">0</div>
<div class="t " style="left:1210.39px;top:617.50px;font-size:13px;line-height:13px;color:#000;font-weight:bold;">0</div>
<div class="t " style="left:1266.39px;top:617.50px;font-size:13px;line-height:13px;color:#000;font-weight:bold;">0</div>
<div class="t " style="left:1322.39px;top:617.50px;font-size:13px;line-height:13px;color:#000;font-weight:bold;">0</div>
<div class="t " style="left:1378.39px;top:617.50px;font-size:13px;line-height:13px;color:#000;font-weight:bold;">0</div>
<div class="t " style="left:1434.39px;top:617.50px;font-size:13px;line-height:13px;color:#000;font-weight:bold;">0</div>
<div class="t " style="left:1490.39px;top:617.50px;font-size:13px;line-height:13px;color:#000;font-weight:bold;">0</div>
<div class="t " style="left:1587.39px;top:617.50px;font-size:13px;line-height:13px;color:#000;font-weight:bold;">0</div>
<div class="r" style="left:0px;top:637px;width:1649px;height:25px;background:#fff;"></div>
<div class="r" style="left:0px;top:662px;width:1649px;height:1px;background:#c4c4c4;"></div>
<div class="r" style="left:1354px;top:637px;width:56px;height:25px;background:#ffffa5;"></div>
<div class="r" style="left:1410px;top:637px;width:112px;height:25px;background:#efefef;"></div>
<div class="r" style="left:810px;top:637px;width:1px;height:25px;background:#dcdcdc;"></div>
<div class="r" style="left:901px;top:637px;width:1px;height:25px;background:#dcdcdc;"></div>
<div class="r" style="left:992px;top:637px;width:1px;height:25px;background:#dcdcdc;"></div>
<div class="r" style="left:1061px;top:637px;width:1px;height:25px;background:#dcdcdc;"></div>
<div class="r" style="left:1130px;top:637px;width:1px;height:25px;background:#dcdcdc;"></div>
<div class="r" style="left:1186px;top:637px;width:1px;height:25px;background:#dcdcdc;"></div>
<div class="r" style="left:1242px;top:637px;width:1px;height:25px;background:#dcdcdc;"></div>
<div class="r" style="left:1298px;top:637px;width:1px;height:25px;background:#dcdcdc;"></div>
<div class="r" style="left:1354px;top:637px;width:1px;height:25px;background:#dcdcdc;"></div>
<div class="r" style="left:1410px;top:637px;width:1px;height:25px;background:#dcdcdc;"></div>
<div class="r" style="left:1466px;top:637px;width:1px;height:25px;background:#dcdcdc;"></div>
<div class="r" style="left:1522px;top:637px;width:1px;height:25px;background:#dcdcdc;"></div>
<svg class="r" style="left:17px;top:643px" width="16" height="14" viewBox="0 0 16 14"><rect x="1.5" y="1.5" width="4" height="4" fill="none" stroke="#4f5f95" stroke-width="1.1"/><rect x="10.5" y="1.5" width="4" height="4" fill="none" stroke="#4f5f95" stroke-width="1.1"/><rect x="10.5" y="8.5" width="4.2" height="4.2" fill="none" stroke="#4f5f95" stroke-width="1.1"/><path d="M6 3.5h4M7.5 3.5v7h2.5" stroke="#7080b0" fill="none"/></svg>
<div class="t " style="left:107.00px;top:644.00px;font-size:13px;line-height:13px;color:#222;letter-spacing:0.386px;transform:scaleX(1.0556);transform-origin:0 0;">OMSM spécifique</div>
<div class="t " style="left:739.00px;top:643.69px;font-size:11px;line-height:11px;color:#8383e0;letter-spacing:0.110px;transform:scaleX(1.0195);transform-origin:0 0;">Technicien</div>
<svg class="r" style="left:793px;top:643px" width="18" height="16" viewBox="0 0 18 16"><path d="M2.5 1.5h12a1.5 1.5 0 0 1 1.5 1.5v7M11 11.5H6l-3 3v-3H2.5A1.5 1.5 0 0 1 1 10V3a1.5 1.5 0 0 1 1.5-1.5" stroke="#5a6a9a" stroke-width="1.1" fill="none"/><path d="M14 9v6M11 12h6" stroke="#1a3070" stroke-width="1.4"/></svg>
<div class="t " style="left:816.25px;top:644.00px;font-size:13px;line-height:13px;color:#111;letter-spacing:0.677px;transform:scaleX(1.1033);transform-origin:0 0;">12/05/2022</div>
<div class="t " style="left:907.25px;top:644.00px;font-size:13px;line-height:13px;color:#111;letter-spacing:0.677px;transform:scaleX(1.1033);transform-origin:0 0;">27/12/2022</div>
<div class="t " style="left:1018.19px;top:643.00px;font-size:13px;line-height:13px;color:#555;letter-spacing:1.009px;transform:scaleX(1.0750);transform-origin:0 0;">64</div>
<div class="t " style="left:1080.95px;top:643.00px;font-size:13px;line-height:13px;color:#555;letter-spacing:0.588px;transform:scaleX(1.0750);transform-origin:0 0;">89,5</div>
<div class="t " style="left:1154.66px;top:644.84px;font-size:12px;line-height:12px;color:#666;">0</div>
<div class="t " style="left:1210.66px;top:644.84px;font-size:12px;line-height:12px;color:#666;">0</div>
<div class="t " style="left:1266.66px;top:644.84px;font-size:12px;line-height:12px;color:#666;">0</div>
<div class="t " style="left:1322.66px;top:644.84px;font-size:12px;line-height:12px;color:#666;">0</div>
<div class="t " style="left:1378.66px;top:644.84px;font-size:12px;line-height:12px;color:#666;">0</div>
<div class="t " style="left:1434.66px;top:644.84px;font-size:12px;line-height:12px;color:#666;">0</div>
<div class="t " style="left:1490.66px;top:644.84px;font-size:12px;line-height:12px;color:#666;">0</div>
<div class="r" style="left:1527px;top:638px;width:62px;height:21px;border:1px solid #7b9ad8;border-radius:4px;background:#fff;"></div>
<div class="t " style="left:1555.16px;top:644.84px;font-size:12px;line-height:12px;color:#444;">0</div>
<div class="t " style="left:1610.45px;top:643.00px;font-size:13px;line-height:13px;color:#555;letter-spacing:0.588px;transform:scaleX(1.0750);transform-origin:0 0;">89,5</div>
<div class="r" style="left:0px;top:663px;width:1649px;height:25px;background:#d5e2f5;"></div>
<div class="r" style="left:0px;top:688px;width:1649px;height:1px;background:#c4c4c4;"></div>
<div class="r" style="left:1354px;top:663px;width:56px;height:25px;background:#ffffa5;"></div>
<div class="r" style="left:1410px;top:663px;width:112px;height:25px;background:#efefef;"></div>
<div class="r" style="left:810px;top:663px;width:1px;height:25px;background:#dcdcdc;"></div>
<div class="r" style="left:901px;top:663px;width:1px;height:25px;background:#dcdcdc;"></div>
<div class="r" style="left:992px;top:663px;width:1px;height:25px;background:#dcdcdc;"></div>
<div class="r" style="left:1061px;top:663px;width:1px;height:25px;background:#dcdcdc;"></div>
<div class="r" style="left:1130px;top:663px;width:1px;height:25px;background:#dcdcdc;"></div>
<div class="r" style="left:1186px;top:663px;width:1px;height:25px;background:#dcdcdc;"></div>
<div class="r" style="left:1242px;top:663px;width:1px;height:25px;background:#dcdcdc;"></div>
<div class="r" style="left:1298px;top:663px;width:1px;height:25px;background:#dcdcdc;"></div>
<div class="r" style="left:1354px;top:663px;width:1px;height:25px;background:#dcdcdc;"></div>
<div class="r" style="left:1410px;top:663px;width:1px;height:25px;background:#dcdcdc;"></div>
<div class="r" style="left:1466px;top:663px;width:1px;height:25px;background:#dcdcdc;"></div>
<div class="r" style="left:1522px;top:663px;width:1px;height:25px;background:#dcdcdc;"></div>
<svg class="r" style="left:17px;top:668px" width="16" height="16" viewBox="0 0 16 16"><path d="M8.00,0.40 L9.48,0.55 L10.22,2.64 L11.22,3.18 L13.37,2.63 L14.32,3.78 L13.36,5.78 L13.69,6.87 L15.60,8.00 L15.45,9.48 L13.36,10.22 L12.82,11.22 L13.37,13.37 L12.22,14.32 L10.22,13.36 L9.13,13.69 L8.00,15.60 L6.52,15.45 L5.78,13.36 L4.78,12.82 L2.63,13.37 L1.68,12.22 L2.64,10.22 L2.31,9.13 L0.40,8.00 L0.55,6.52 L2.64,5.78 L3.18,4.78 L2.63,2.63 L3.78,1.68 L5.78,2.64 L6.87,2.31Z" fill="none" stroke="#5a6a9a" stroke-width="1.1" stroke-linejoin="round"/><circle cx="8" cy="8" r="3" fill="none" stroke="#5a6a9a" stroke-width="1.1"/></svg>
<svg class="r" style="left:43px;top:669px" width="12" height="12" viewBox="0 0 12 12"><rect x="0.5" y="0.5" width="11" height="11" rx="2" fill="none" stroke="#8d9dc9"/><path d="M3 6h6" stroke="#5a6a9a" stroke-width="1.6"/><path d="M6 3v6" stroke="#5a6a9a" stroke-width="1.6"/></svg>
<div class="t " style="left:66.00px;top:670.00px;font-size:13px;line-height:13px;color:#111;font-weight:bold;letter-spacing:0.679px;transform:scaleX(1.1090);transform-origin:0 0;">Projet Développement Produit</div>
<div class="t " style="left:1154.39px;top:669.50px;font-size:13px;line-height:13px;color:#000;font-weight:bold;">0</div>
<div class="t " style="left:1210.39px;top:669.50px;font-size:13px;line-height:13px;color:#000;font-weight:bold;">0</div>
<div class="t " style="left:1266.39px;top:669.50px;font-size:13px;line-height:13px;color:#000;font-weight:bold;">0</div>
<div class="t " style="left:1322.39px;top:669.50px;font-size:13px;line-height:13px;color:#000;font-weight:bold;">0</div>
<div class="t " style="left:1378.39px;top:669.50px;font-size:13px;line-height:13px;color:#000;font-weight:bold;">0</div>
<div class="t " style="left:1434.39px;top:669.50px;font-size:13px;line-height:13px;color:#000;font-weight:bold;">0</div>
<div class="t " style="left:1490.39px;top:669.50px;font-size:13px;line-height:13px;color:#000;font-weight:bold;">0</div>
<div class="t " style="left:1587.39px;top:669.50px;font-size:13px;line-height:13px;color:#000;font-weight:bold;">0</div>
<div class="r" style="left:0px;top:689px;width:1649px;height:25px;background:#d5e2f5;"></div>
<div class="r" style="left:0px;top:714px;width:1649px;height:1px;background:#c4c4c4;"></div>
<div class="r" style="left:1354px;top:689px;width:56px;height:25px;background:#ffffa5;"></div>
<div class="r" style="left:1410px;top:689px;width:112px;height:25px;background:#efefef;"></div>
<div class="r" style="left:810px;top:689px;width:1px;height:25px;background:#dcdcdc;"></div>
<div class="r" style="left:901px;top:689px;width:1px;height:25px;background:#dcdcdc;"></div>
<div class="r" style="left:992px;top:689px;width:1px;height:25px;background:#dcdcdc;"></div>
<div class="r" style="left:1061px;top:689px;width:1px;height:25px;background:#dcdcdc;"></div>
<div class="r" style="left:1130px;top:689px;width:1px;height:25px;background:#dcdcdc;"></div>
<div class="r" style="left:1186px;top:689px;width:1px;height:25px;background:#dcdcdc;"></div>
<div class="r" style="left:1242px;top:689px;width:1px;height:25px;background:#dcdcdc;"></div>
<div class="r" style="left:1298px;top:689px;width:1px;height:25px;background:#dcdcdc;"></div>
<div class="r" style="left:1354px;top:689px;width:1px;height:25px;background:#dcdcdc;"></div>
<div class="r" style="left:1410px;top:689px;width:1px;height:25px;background:#dcdcdc;"></div>
<div class="r" style="left:1466px;top:689px;width:1px;height:25px;background:#dcdcdc;"></div>
<div class="r" style="left:1522px;top:689px;width:1px;height:25px;background:#dcdcdc;"></div>
<svg class="r" style="left:17px;top:694px" width="16" height="16" viewBox="0 0 16 16"><path d="M8.00,0.40 L9.48,0.55 L10.22,2.64 L11.22,3.18 L13.37,2.63 L14.32,3.78 L13.36,5.78 L13.69,6.87 L15.60,8.00 L15.45,9.48 L13.36,10.22 L12.82,11.22 L13.37,13.37 L12.22,14.32 L10.22,13.36 L9.13,13.69 L8.00,15.60 L6.52,15.45 L5.78,13.36 L4.78,12.82 L2.63,13.37 L1.68,12.22 L2.64,10.22 L2.31,9.13 L0.40,8.00 L0.55,6.52 L2.64,5.78 L3.18,4.78 L2.63,2.63 L3.78,1.68 L5.78,2.64 L6.87,2.31Z" fill="none" stroke="#5a6a9a" stroke-width="1.1" stroke-linejoin="round"/><circle cx="8" cy="8" r="3" fill="none" stroke="#5a6a9a" stroke-width="1.1"/></svg>
<svg class="r" style="left:59px;top:695px" width="12" height="12" viewBox="0 0 12 12"><rect x="0.5" y="0.5" width="11" height="11" rx="2" fill="none" stroke="#8d9dc9"/><path d="M3 6h6" stroke="#5a6a9a" stroke-width="1.6"/></svg>
<div class="t " style="left:82.00px;top:696.00px;font-size:13px;line-height:13px;color:#111;font-weight:bold;letter-spacing:0.664px;transform:scaleX(1.0745);transform-origin:0 0;">Gamme ELP</div>
<div class="t " style="left:1154.39px;top:695.50px;font-size:13px;line-height:13px;color:#000;font-weight:bold;">0</div>
<div class="t " style="left:1210.39px;top:695.50px;font-size:13px;line-height:13px;color:#000;font-weight:bold;">0</div>
<div class="t " style="left:1266.39px;top:695.50px;font-size:13px;line-height:13px;color:#000;font-weight:bold;">0</div>
<div class="t " style="left:1322.39px;top:695.50px;font-size:13px;line-height:13px;color:#000;font-weight:bold;">0</div>
<div class="t " style="left:1378.39px;top:695.50px;font-size:13px;line-height:13px;color:#000;font-weight:bold;">0</div>
<div class="t " style="left:1434.39px;top:695.50px;font-size:13px;line-height:13px;color:#000;font-weight:bold;">0</div>
<div class="t " style="left:1490.39px;top:695.50px;font-size:13px;line-height:13px;color:#000;font-weight:bold;">0</div>
<div class="t " style="left:1587.39px;top:695.50px;font-size:13px;line-height:13px;color:#000;font-weight:bold;">0</div>
<div class="r" style="left:0px;top:715px;width:1649px;height:25px;background:#d5e2f5;"></div>
<div class="r" style="left:0px;top:740px;width:1649px;height:1px;background:#c4c4c4;"></div>
<div class="r" style="left:1354px;top:715px;width:56px;height:25px;background:#ffffa5;"></div>
<div class="r" style="left:1410px;top:715px;width:112px;height:25px;background:#efefef;"></div>
<div class="r" style="left:810px;top:715px;width:1px;height:25px;background:#dcdcdc;"></div>
<div class="r" style="left:901px;top:715px;width:1px;height:25px;background:#dcdcdc;"></div>
<div class="r" style="left:992px;top:715px;width:1px;height:25px;background:#dcdcdc;"></div>
<div class="r" style="left:1061px;top:715px;width:1px;height:25px;background:#dcdcdc;"></div>
<div class="r" style="left:1130px;top:715px;width:1px;height:25px;background:#dcdcdc;"></div>
<div class="r" style="left:1186px;top:715px;width:1px;height:25px;background:#dcdcdc;"></div>
<div class="r" style="left:1242px;top:715px;width:1px;height:25px;background:#dcdcdc;"></div>
<div class="r" style="left:1298px;top:715px;width:1px;height:25px;background:#dcdcdc;"></div>
<div class="r" style="left:1354px;top:715px;width:1px;height:25px;background:#dcdcdc;"></div>
<div class="r" style="left:1410px;top:715px;width:1px;height:25px;background:#dcdcdc;"></div>
<div class="r" style="left:1466px;top:715px;width:1px;height:25px;background:#dcdcdc;"></div>
<div class="r" style="left:1522px;top:715px;width:1px;height:25px;background:#dcdcdc;"></div>
<svg class="r" style="left:17px;top:720px" width="16" height="16" viewBox="0 0 16 16"><path d="M8.00,0.40 L9.48,0.55 L10.22,2.64 L11.22,3.18 L13.37,2.63 L14.32,3.78 L13.36,5.78 L13.69,6.87 L15.60,8.00 L15.45,9.48 L13.36,10.22 L12.82,11.22 L13.37,13.37 L12.22,14.32 L10.22,13.36 L9.13,13.69 L8.00,15.60 L6.52,15.45 L5.78,13.36 L4.78,12.82 L2.63,13.37 L1.68,12.22 L2.64,10.22 L2.31,9.13 L0.40,8.00 L0.55,6.52 L2.64,5.78 L3.18,4.78 L2.63,2.63 L3.78,1.68 L5.78,2.64 L6.87,2.31Z" fill="none" stroke="#5a6a9a" stroke-width="1.1" stroke-linejoin="round"/><circle cx="8" cy="8" r="3" fill="none" stroke="#5a6a9a" stroke-width="1.1"/></svg>
<svg class="r" style="left:75px;top:721px" width="12" height="12" viewBox="0 0 12 12"><rect x="0.5" y="0.5" width="11" height="11" rx="2" fill="none" stroke="#8d9dc9"/><path d="M3 6h6" stroke="#5a6a9a" stroke-width="1.6"/></svg>
<div class="t " style="left:98.00px;top:722.00px;font-size:13px;line-height:13px;color:#111;font-weight:bold;letter-spacing:0.596px;transform:scaleX(1.0960);transform-origin:0 0;">Certification UL ELP HO INOX</div>
<div class="t " style="left:1154.39px;top:721.50px;font-size:13px;line-height:13px;color:#000;font-weight:bold;">0</div>
<div class="t " style="left:1210.39px;top:721.50px;font-size:13px;line-height:13px;color:#000;font-weight:bold;">0</div>
<div class="t " style="left:1266.39px;top:721.50px;font-size:13px;line-height:13px;color:#000;font-weight:bold;">0</div>
<div class="t " style="left:1322.39px;top:721.50px;font-size:13px;line-height:13px;color:#000;font-weight:bold;">0</div>
<div class="t " style="left:1378.39px;top:721.50px;font-size:13px;line-height:13px;color:#000;font-weight:bold;">0</div>
<div class="t " style="left:1434.39px;top:721.50px;font-size:13px;line-height:13px;color:#000;font-weight:bold;">0</div>
<div class="t " style="left:1490.39px;top:721.50px;font-size:13px;line-height:13px;color:#000;font-weight:bold;">0</div>
<div class="t " style="left:1587.39px;top:721.50px;font-size:13px;line-height:13px;color:#000;font-weight:bold;">0</div>
<div class="r" style="left:0px;top:741px;width:1649px;height:25px;background:#fff;"></div>
<div class="r" style="left:0px;top:766px;width:1649px;height:1px;background:#c4c4c4;"></div>
<div class="r" style="left:1354px;top:741px;width:56px;height:25px;background:#ffffa5;"></div>
<div class="r" style="left:1410px;top:741px;width:112px;height:25px;background:#efefef;"></div>
<div class="r" style="left:810px;top:741px;width:1px;height:25px;background:#dcdcdc;"></div>
<div class="r" style="left:901px;top:741px;width:1px;height:25px;background:#dcdcdc;"></div>
<div class="r" style="left:992px;top:741px;width:1px;height:25px;background:#dcdcdc;"></div>
<div class="r" style="left:1061px;top:741px;width:1px;height:25px;background:#dcdcdc;"></div>
<div class="r" style="left:1130px;top:741px;width:1px;height:25px;background:#dcdcdc;"></div>
<div class="r" style="left:1186px;top:741px;width:1px;height:25px;background:#dcdcdc;"></div>
<div class="r" style="left:1242px;top:741px;width:1px;height:25px;background:#dcdcdc;"></div>
<div class="r" style="left:1298px;top:741px;width:1px;height:25px;background:#dcdcdc;"></div>
<div class="r" style="left:1354px;top:741px;width:1px;height:25px;background:#dcdcdc;"></div>
<div class="r" style="left:1410px;top:741px;width:1px;height:25px;background:#dcdcdc;"></div>
<div class="r" style="left:1466px;top:741px;width:1px;height:25px;background:#dcdcdc;"></div>
<div class="r" style="left:1522px;top:741px;width:1px;height:25px;background:#dcdcdc;"></div>
<div class="t " style="left:1158.00px;top:748.84px;font-size:12px;line-height:12px;color:#666;"></div>
<div class="t " style="left:1214.00px;top:748.84px;font-size:12px;line-height:12px;color:#666;"></div>
<div class="t " style="left:1270.00px;top:748.84px;font-size:12px;line-height:12px;color:#666;"></div>
<div class="t " style="left:1326.00px;top:748.84px;font-size:12px;line-height:12px;color:#666;"></div>
<div class="t " style="left:1382.00px;top:748.84px;font-size:12px;line-height:12px;color:#666;"></div>
<div class="t " style="left:1438.00px;top:748.84px;font-size:12px;line-height:12px;color:#666;"></div>
<div class="t " style="left:1494.00px;top:748.84px;font-size:12px;line-height:12px;color:#666;"></div>
<div class="r" style="left:1527px;top:742px;width:62px;height:21px;border:1px solid #7b9ad8;border-radius:4px;background:#fff;"></div>
<div class="t " style="left:1555.16px;top:748.84px;font-size:12px;line-height:12px;color:#444;">0</div>
</div>
<div class="r" style="left:175px;top:968px;width:1649px;height:7px;background:#2f3a4e;"></div>
<div class="r" style="left:1305px;top:968px;width:1px;height:7px;background:#d8d8d8;"></div>
<div class="r" style="left:1361px;top:968px;width:1px;height:7px;background:#d8d8d8;"></div>
<div class="r" style="left:1417px;top:968px;width:1px;height:7px;background:#d8d8d8;"></div>
<div class="r" style="left:1473px;top:968px;width:1px;height:7px;background:#d8d8d8;"></div>
<div class="r" style="left:1529px;top:968px;width:1px;height:7px;background:#d8d8d8;"></div>
<div class="r" style="left:1585px;top:968px;width:1px;height:7px;background:#d8d8d8;"></div>
<div class="r" style="left:1641px;top:968px;width:1px;height:7px;background:#d8d8d8;"></div>
<div class="r" style="left:1697px;top:968px;width:1px;height:7px;background:#d8d8d8;"></div>
<svg class="r" style="left:838px;top:462px;" width="96" height="96" viewBox="0 0 96 96"><g opacity="0.85"><path d="M67.38,36.25 L73.81,36.15 L75.50,45.74 L69.43,47.84 L68.01,54.23 L72.63,58.70 L67.04,66.68 L61.26,63.87 L55.75,67.38 L55.85,73.81 L46.26,75.50 L44.16,69.43 L37.77,68.01 L33.30,72.63 L25.32,67.04 L28.13,61.26 L24.62,55.75 L18.19,55.85 L16.50,46.26 L22.57,44.16 L23.99,37.77 L19.37,33.30 L24.96,25.32 L30.74,28.13 L36.25,24.62 L36.15,18.19 L45.74,16.50 L47.84,22.57 L54.23,23.99 L58.70,19.37 L66.68,24.96 L63.87,30.74Z" fill="#4d5277" stroke="#4d5277" stroke-width="3" stroke-linejoin="round"/></g><circle cx="46" cy="46" r="15" fill="none" stroke="#ea965c" stroke-width="7.5" opacity="0.93"/><circle cx="46" cy="46" r="11.2" fill="#d5e2f5"/><path d="M66.2 4.7 A46 46 0 0 1 67 86.5" stroke="#e8935a" stroke-width="3.2" fill="none" stroke-linecap="round"/><path d="M76 88.7 L65.3 86.4 L68 76.7" stroke="#e8935a" stroke-width="3.2" fill="none" stroke-linecap="round" stroke-linejoin="round"/><path d="M70 85 A44 44 0 0 1 8 72" stroke="#e8935a" stroke-width="3.2" fill="none" stroke-linecap="round"/><path d="M7.3 82 L8 72 L19 72.3" stroke="#e8935a" stroke-width="3.2" fill="none" stroke-linecap="round" stroke-linejoin="round"/></svg>
</body></html>
